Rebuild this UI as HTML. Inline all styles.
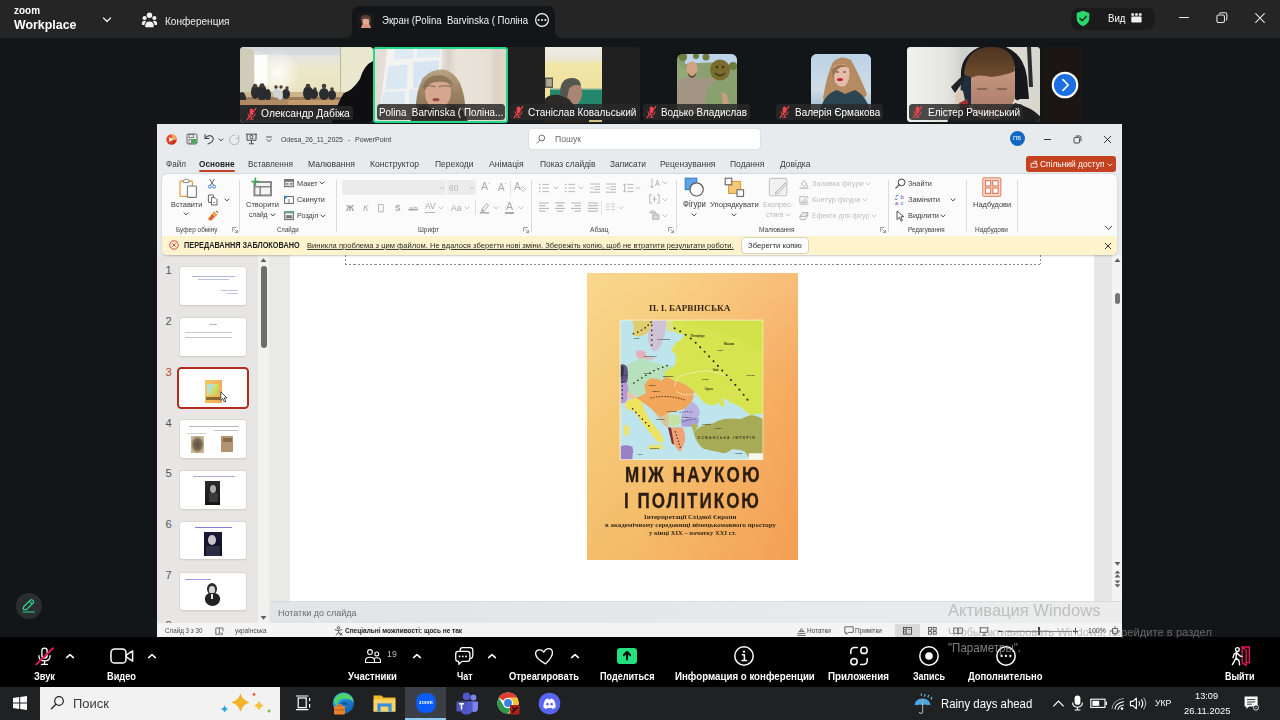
<!DOCTYPE html>
<html lang="uk">
<head>
<meta charset="utf-8">
<title>Zoom Workplace</title>
<style>
*{box-sizing:border-box;margin:0;padding:0}
html,body{width:1280px;height:720px;overflow:hidden;background:#131619;font-family:"Liberation Sans",sans-serif;color:#fff}
#root,#root *{position:absolute}
#root svg{overflow:visible}
.t{white-space:nowrap;line-height:1}
#topbar{left:0;top:0;width:1280px;height:37.5px;background:#252526}
#tab{left:352px;top:6px;width:203px;height:32px;background:#131619;border-radius:7px 7px 0 0}
.tile{overflow:hidden;border-radius:4px}
#ppt{left:157px;top:124px;width:965px;height:513px;background:#e8ebee;overflow:hidden;color:#222}
#ztool{left:0;top:637px;width:1280px;height:49.5px;background:#000}
#task{left:0;top:686.5px;width:1280px;height:33.5px;background:#1f2123}

</style>
</head>
<body>
<div id="root" style="left:0;top:0;width:1280px;height:720px">
<!-- TOP BAR -->
<div id="topbar">
<div class="t" style="left:13.5px;top:5.96px;font-size:10px;color:#fff;font-weight:bold;transform:scaleX(0.9958);transform-origin:0 0;">zoom</div>
<div class="t" style="left:13.5px;top:17.57px;font-size:13.2px;color:#fff;font-weight:bold;transform:scaleX(0.9396);transform-origin:0 0;">Workplace</div>
<svg style="left:101px;top:15px;" width="12" height="10" viewBox="0 0 12 10"><path d="M2.5 3 L6 6.5 L9.5 3" fill="none" stroke="#e6e6e6" stroke-width="1.4" stroke-linecap="round" stroke-linejoin="round"/></svg>
<svg style="left:141px;top:11px;" width="17" height="17" viewBox="0 0 17 17"><g fill="#f2f2f2"><circle cx="8.5" cy="4.3" r="2.7"/><circle cx="3.6" cy="7" r="2.1"/><circle cx="13.4" cy="7" r="2.1"/><path d="M4.2 15.5 q0-5 4.3-5 q4.3 0 4.3 5 q0 .8-.8.8 h-7 q-.8 0-.8-.8z"/><path d="M.8 13.2 q0-3.4 2.8-3.4 q1.2 0 1.6.6 q-1.6 1.2-1.8 3.6 h-1.8 q-.8 0-.8-.8z"/><path d="M16.2 13.2 q0-3.4-2.8-3.4 q-1.2 0-1.6.6 q1.6 1.2 1.8 3.6 h1.8 q.8 0 .8-.8z"/></g></svg>
<div class="t" style="left:165.0px;top:14.60px;font-size:12px;color:#ececec;transform:scale(0.8389,0.8830);transform-origin:0 10.00px;">Конференция</div>
<div id="tab"></div>
<svg style="left:345px;top:30px;" width="8" height="8" viewBox="0 0 8 8"><path d="M8 8 H0 Q7 8 7 0 H8z" fill="#131619"/></svg>
<svg style="left:554px;top:30px;" width="8" height="8" viewBox="0 0 8 8"><path d="M0 8 H8 Q1 8 1 0 H0z" fill="#131619"/></svg>
<svg style="left:358px;top:13px;" width="16" height="16" viewBox="0 0 16 16"><rect width="16" height="16" rx="3" fill="#1a1a1a"/><path d="M2.5 6 Q3 1.5 8.5 2 Q13.5 2.5 13 8 L12 11 L4 11 Z" fill="#5a4034"/><path d="M4.5 6.5 Q7 5 11 6.5 L11 12 Q8 14.5 5 12z" fill="#e8a894"/><path d="M4 11.5 h8 l1 3.5 h-10z" fill="#d89480"/></svg>
<div class="t" style="left:381.5px;top:14.40px;font-size:12px;color:#f2f2f2;transform:scale(0.7997,0.8418);transform-origin:0 10.00px;">Экран (Polina  Barvinska ( Поліна</div>
<svg style="left:532.7px;top:11px;" width="18" height="18" viewBox="0 0 18 18"><circle cx="9" cy="9" r="6.4" fill="none" stroke="#f2f2f2" stroke-width="1.2"/><circle cx="5.6" cy="9" r="1" fill="#f2f2f2"/><circle cx="9" cy="9" r="1" fill="#f2f2f2"/><circle cx="12.4" cy="9" r="1" fill="#f2f2f2"/></svg>
<div style="left:1071px;top:7.5px;width:83.5px;height:22px;background:#1b1b1b;border-radius:8px;"></div>
<svg style="left:1075px;top:10px;" width="16" height="17" viewBox="0 0 16 17"><path d="M8 .8 L14.3 3 V8.2 Q14.3 13.4 8 16.2 Q1.7 13.4 1.7 8.2 V3z" fill="#2bd56b"/><path d="M5 8.6 L7.2 10.8 L11.2 6.4" fill="none" stroke="#0e3a1e" stroke-width="1.5" stroke-linecap="round" stroke-linejoin="round"/></svg>
<div class="t" style="left:1108.0px;top:12.31px;font-size:12.5px;color:#fff;transform:scale(0.7738,0.8146);transform-origin:0 10.25px;">Вид</div>
<svg style="left:1131px;top:13px;" width="11" height="10" viewBox="0 0 11 10"><g fill="#f0f0f0"><rect x=".3" y=".3" width="2.7" height="2.4" rx=".4"/><rect x="4.1" y=".3" width="2.7" height="2.4" rx=".4"/><rect x="7.9" y=".3" width="2.7" height="2.4" rx=".4"/><rect x=".3" y="3.6" width="10.3" height="6" rx=".8"/></g></svg>
<div style="left:1178.5px;top:17.2px;width:10px;height:1.2px;background:#e6e6e6;"></div>
<svg style="left:1215px;top:11px;" width="14" height="14" viewBox="0 0 16 16"><rect x="2.2" y="4.6" width="8.6" height="8.6" rx="1.8" fill="none" stroke="#e6e6e6" stroke-width="1.2"/><path d="M5 3.2 Q5.6 2 7 2 H11.4 Q13.6 2 13.6 4.2 V8.6 Q13.6 10 12.4 10.6" fill="none" stroke="#e6e6e6" stroke-width="1.2"/></svg>
<svg style="left:1254px;top:12px;" width="12" height="12" viewBox="0 0 14 14"><path d="M2 2 L12 12 M12 2 L2 12" stroke="#e6e6e6" stroke-width="1.3" stroke-linecap="round"/></svg>
</div>
<!-- VIDEO STRIP -->
<div class="tile" style="left:240px;top:47px;width:133px;height:75.5px;background:#e4e2c4">
<svg style="left:0px;top:0px;filter:blur(.55px);" width="133" height="76" viewBox="0 0 133 76">
<defs><linearGradient id="c1" x1="0" y1="0" x2="0" y2="1"><stop offset="0" stop-color="#d9dde2"/><stop offset=".16" stop-color="#e6e6dc"/><stop offset=".3" stop-color="#ebe8c8"/><stop offset="1" stop-color="#e3dfb9"/></linearGradient>
<radialGradient id="g1" cx=".5" cy=".5" r=".5"><stop offset="0" stop-color="#fff" stop-opacity=".95"/><stop offset="1" stop-color="#fff" stop-opacity="0"/></radialGradient></defs>
<rect width="133" height="76" fill="url(#c1)"/>
<path d="M0 0 H14 V50 H0z" fill="#cfcdb9"/>
<path d="M0 0 H133 V3 L100 8 L30 8 L14 3z" fill="#d5d9de"/>
<ellipse cx="38" cy="26" rx="22" ry="24" fill="url(#g1)"/>
<rect x="14.5" y="8" width="13" height="30" fill="#fdfdfb"/>
<rect x="100" y="0" width="1.2" height="50" fill="#b9b79d"/>
<rect x="101" y="0" width="32" height="52" fill="#e9e7cd"/>
<rect x="0" y="49" width="104" height="10" fill="#9a7a58"/>
<rect x="0" y="45" width="104" height="5" fill="#c9b48c"/>
<g fill="#2a2c30"><ellipse cx="15" cy="45" rx="4" ry="7"/><ellipse cx="22" cy="46" rx="5" ry="8"/><ellipse cx="28" cy="48" rx="3" ry="6"/><ellipse cx="46" cy="47" rx="4" ry="5"/><ellipse cx="68" cy="46" rx="5" ry="7"/><ellipse cx="74" cy="47" rx="4" ry="5"/><ellipse cx="84" cy="47" rx="5" ry="6"/><ellipse cx="92" cy="48" rx="4" ry="5"/><ellipse cx="2" cy="52" rx="4" ry="7"/></g>
<g fill="#cfd2d4"><ellipse cx="36" cy="46" rx="3" ry="5"/><ellipse cx="40" cy="48" rx="3" ry="5"/></g>
<g fill="#4a3a34"><circle cx="15" cy="39" r="2.2"/><circle cx="22" cy="38.6" r="2.4"/><circle cx="36" cy="40" r="1.7"/><circle cx="41" cy="40" r="1.7"/><circle cx="47" cy="41" r="1.7"/><circle cx="68" cy="39" r="2.3"/><circle cx="75" cy="42" r="1.7"/><circle cx="84" cy="39" r="2.3"/><circle cx="92" cy="42" r="1.7"/></g>
<rect x="0" y="53" width="104" height="6" fill="#b08a62"/>
<rect x="48" y="53" width="50" height="5" fill="#c39a6c"/>
<rect x="0" y="58" width="133" height="18" fill="#2b2a2a"/>
<path d="M133 14 Q124 18 120 32 Q112 44 104 46 Q98 54 92 76 H133z" fill="#0f0f11"/>
</svg>
</div>
<div style="left:243px;top:105.5px;width:109.69999999999999px;height:14.8px;background:rgba(40,40,40,.84);border-radius:3.5px;"></div>
<svg style="left:246px;top:107.5px;" width="11" height="12" viewBox="0 0 11 12"><g transform="translate(0.5,0)"><rect x="3.2" y=".6" width="3.6" height="6.6" rx="1.8" fill="#f0444e"/><path d="M1.4 5.4 Q1.4 9 5 9 Q8.6 9 8.6 5.4 M5 9 V11 M3 11.2 H7" fill="none" stroke="#f0444e" stroke-width="1"/><path d="M.6 11.6 L9.4 .4" stroke="#f0444e" stroke-width="1.2" stroke-linecap="round"/></g></svg>
<div class="t" style="left:261.0px;top:108.08px;font-size:11px;color:#fff;transform:scale(0.9349,0.9842);transform-origin:0 9.50px;">Олександр Дабіжа</div>
<div class="tile" style="left:373px;top:46.5px;width:134.5px;height:76px;background:#e6dfd6;border:2px solid #23d98b;border-radius:3px">
<svg style="left:-5px;top:-6.5px;filter:blur(.55px);" width="140" height="84" viewBox="0 0 1200 720">
<defs><linearGradient id="w2" x1="0" y1="0" x2="1" y2="0"><stop offset="0" stop-color="#e4ddd5"/><stop offset=".5" stop-color="#ece6de"/><stop offset=".56" stop-color="#d9d1c6"/><stop offset=".62" stop-color="#e9e3da"/><stop offset=".85" stop-color="#e6dfd4"/><stop offset=".9" stop-color="#dcd3c5"/><stop offset="1" stop-color="#e2d9cc"/></linearGradient>
<linearGradient id="h2" x1="0" y1="0" x2="0" y2="1"><stop offset="0" stop-color="#b7a587"/><stop offset=".5" stop-color="#a08868"/><stop offset="1" stop-color="#8a7458"/></linearGradient></defs>
<rect width="1200" height="720" fill="url(#w2)"/>
<path d="M150 40 H612 V540 H90z" fill="#f3f3f1"/>
<path d="M215 55 H372 V140 L205 150z M402 55 H600 V128 L402 138z" fill="#e0eaf1"/>
<path d="M160 205 L322 192 L318 398 L130 410z" fill="#dbe8f2"/>
<path d="M372 172 L592 158 L590 385 L370 396z" fill="#d7e6f2"/>
<path d="M118 428 L300 420 L296 530 L100 534z M336 410 L440 404 L436 530 L334 530z" fill="#dde8f0"/>
<path d="M392 560 Q396 420 452 310 Q520 236 624 234 Q716 250 770 350 Q812 450 816 560z" fill="url(#h2)"/>
<path d="M468 400 Q480 330 580 326 Q690 330 694 420 Q700 520 610 580 Q520 580 480 500z" fill="#d6a78f"/>
<path d="M452 380 Q480 290 590 286 Q690 290 716 380 Q660 330 580 342 Q500 340 470 420z" fill="#8f785a"/>
<path d="M456 384 Q500 366 560 384 M590 384 Q640 366 690 384" fill="none" stroke="#7b6a5c" stroke-width="9"/>
<ellipse cx="566" cy="494" rx="30" ry="13" fill="#96484a"/>
<path d="M340 720 Q360 560 470 540 Q580 620 720 540 Q820 570 850 720z" fill="#38342f"/>
</svg>
</div>
<div style="left:376.5px;top:103.8px;width:128.3px;height:15.8px;background:rgba(40,40,40,.84);border-radius:3.5px;"></div>
<div class="t" style="left:379.3px;top:106.88px;font-size:11px;color:#fff;transform:scale(0.8957,0.9429);transform-origin:0 9.50px;">Polina  Barvinska ( Поліна...</div>
<div style="left:508.5px;top:46.5px;width:131.5px;height:76px;background:#202020;border-radius:0 4px 4px 0;"></div>
<div class="tile" style="left:544.5px;top:46.5px;width:57px;height:76px;border-radius:0;background:#efe3a4">
<svg style="left:0px;top:0px;filter:blur(.55px);" width="57" height="76" viewBox="0 0 57 76">
<defs><linearGradient id="c3" x1="0" y1="0" x2="0" y2="1"><stop offset="0" stop-color="#efeee6"/><stop offset=".16" stop-color="#e9e6d6"/><stop offset=".22" stop-color="#f1e6a8"/><stop offset="1" stop-color="#eedc94"/></linearGradient></defs>
<rect width="57" height="76" fill="url(#c3)"/>
<rect x="0" y="30.5" width="8" height="10.5" fill="#5d5b4c"/><rect x="1.2" y="32" width="5.6" height="7.5" fill="#a9a995"/>
<rect x="5" y="41" width="52" height="22" fill="#24866a"/>
<rect x="5" y="41" width="52" height="1.6" fill="#b9c9a5"/>
<path d="M15 46 Q15 31 27 31 Q36 31 36 40 L33 44 L26 50 L17 52z" fill="#55564f"/>
<path d="M24 42 Q28 36 36 39 Q38 46 36 52 Q34 58 28 58 L22 52z" fill="#a98672"/>
<path d="M0 52 Q4 47 14 48 L24 52 L30 60 L30 76 H0z" fill="#2b2a27"/>
<rect x="0" y="62" width="57" height="14" fill="#26241f"/>
<rect x="44" y="73" width="13" height="2" fill="#d2c48c"/>
</svg>
</div>
<div style="left:510.4px;top:104px;width:129.60000000000002px;height:15.8px;background:rgba(40,40,40,.84);border-radius:3.5px;"></div>
<svg style="left:513.4px;top:106px;" width="11" height="12" viewBox="0 0 11 12"><g transform="translate(0.5,0)"><rect x="3.2" y=".6" width="3.6" height="6.6" rx="1.8" fill="#f0444e"/><path d="M1.4 5.4 Q1.4 9 5 9 Q8.6 9 8.6 5.4 M5 9 V11 M3 11.2 H7" fill="none" stroke="#f0444e" stroke-width="1"/><path d="M.6 11.6 L9.4 .4" stroke="#f0444e" stroke-width="1.2" stroke-linecap="round"/></g></svg>
<div class="t" style="left:528.0px;top:107.08px;font-size:11px;color:#fff;transform:scale(0.9088,0.9566);transform-origin:0 9.50px;">Станіслав Ковальський</div>
<div class="tile" style="left:677px;top:54px;width:60px;height:60px;border-radius:6px;background:#7f9566">
<svg style="left:0px;top:0px;filter:blur(.55px);" width="60" height="60" viewBox="0 0 60 60">
<rect width="60" height="60" fill="#8aa070"/>
<path d="M8 0 H60 V12 Q40 6 8 10z" fill="#bcd3ea"/>
<g fill="#6d7b3c"><circle cx="6" cy="3" r="4"/><circle cx="19" cy="2" r="3"/><circle cx="29" cy="3" r="3.5"/><circle cx="56" cy="12" r="4"/></g>
<path d="M0 10 Q10 14 12 24 L0 30z" fill="#93a879"/>
<ellipse cx="43" cy="16" rx="10" ry="10.5" fill="#7a6b2e"/>
<path d="M38 19 Q43 24 48 19" fill="none" stroke="#3d3414" stroke-width="1.2"/><circle cx="40" cy="13" r="1.2" fill="#3d3414"/><circle cx="46" cy="13" r="1.2" fill="#3d3414"/>
<path d="M24 60 Q22 40 36 28 Q48 26 56 34 Q60 44 58 60z" fill="#86a06e"/>
<path d="M0 30 Q4 23 14 23 L26 25 Q34 22 40 26 L30 36 L26 60 H0z" fill="#a39584"/>
<ellipse cx="15" cy="15" rx="5.6" ry="7.5" fill="#d2a486"/>
<path d="M10.5 18 Q15 26 19.5 18 Q19 23 15 24 Q11 23 10.5 18z" fill="#5a4436"/>
<path d="M44 38 L50 40 L52 50 L46 50z" fill="#c89e82"/>
</svg>
</div>
<div style="left:643px;top:104px;width:107px;height:15.8px;background:rgba(40,40,40,.84);border-radius:3.5px;"></div>
<svg style="left:646px;top:106px;" width="11" height="12" viewBox="0 0 11 12"><g transform="translate(0.5,0)"><rect x="3.2" y=".6" width="3.6" height="6.6" rx="1.8" fill="#f0444e"/><path d="M1.4 5.4 Q1.4 9 5 9 Q8.6 9 8.6 5.4 M5 9 V11 M3 11.2 H7" fill="none" stroke="#f0444e" stroke-width="1"/><path d="M.6 11.6 L9.4 .4" stroke="#f0444e" stroke-width="1.2" stroke-linecap="round"/></g></svg>
<div class="t" style="left:661.0px;top:107.08px;font-size:11px;color:#fff;transform:scale(0.8978,0.9450);transform-origin:0 9.50px;">Водько Владислав</div>
<div class="tile" style="left:810.5px;top:54px;width:60px;height:60px;border-radius:6px;background:#c3d5e4">
<svg style="left:0px;top:0px;filter:blur(.55px);" width="60" height="60" viewBox="0 0 60 60">
<defs><linearGradient id="s5" x1="0" y1="0" x2="0" y2="1"><stop offset="0" stop-color="#bcd2e6"/><stop offset=".6" stop-color="#cfdce6"/><stop offset=".8" stop-color="#b6c8d6"/><stop offset="1" stop-color="#9fb4c4"/></linearGradient></defs>
<rect width="60" height="60" fill="url(#s5)"/>
<path d="M12 44 Q16 20 22 8 Q30 0 40 6 Q48 20 56 40 L52 46 L14 48z" fill="#b58c62"/>
<path d="M22 14 Q30 6 38 14 Q40 26 34 32 Q28 34 24 28z" fill="#e4bcac"/>
<path d="M21 16 Q28 6 39 14 Q32 11 27 15 Q23 19 22 26z" fill="#9c7450"/>
<ellipse cx="29" cy="25.5" rx="3" ry="1.6" fill="#c2212e"/>
<path d="M25 18 h3 M32 18 h3" stroke="#4d3a30" stroke-width="1.2"/>
<path d="M8 60 Q12 40 26 36 L34 40 L44 36 Q56 42 60 60z" fill="#2b4652"/>
</svg>
</div>
<div style="left:776.4px;top:104px;width:106.20000000000005px;height:15.8px;background:rgba(40,40,40,.84);border-radius:3.5px;"></div>
<svg style="left:779.4px;top:106px;" width="11" height="12" viewBox="0 0 11 12"><g transform="translate(0.5,0)"><rect x="3.2" y=".6" width="3.6" height="6.6" rx="1.8" fill="#f0444e"/><path d="M1.4 5.4 Q1.4 9 5 9 Q8.6 9 8.6 5.4 M5 9 V11 M3 11.2 H7" fill="none" stroke="#f0444e" stroke-width="1"/><path d="M.6 11.6 L9.4 .4" stroke="#f0444e" stroke-width="1.2" stroke-linecap="round"/></g></svg>
<div class="t" style="left:794.5px;top:107.08px;font-size:11px;color:#fff;transform:scale(0.9048,0.9524);transform-origin:0 9.50px;">Валерія Єрмакова</div>
<div class="tile" style="left:906.5px;top:46.8px;width:133.5px;height:75.4px;border-radius:4px;background:#dedfda">
<svg style="left:0px;top:0px;filter:blur(.55px);" width="134" height="76" viewBox="0 0 134 76">
<defs><linearGradient id="w6" x1="0" y1="0" x2="1" y2="0"><stop offset="0" stop-color="#f1f2ef"/><stop offset=".3" stop-color="#e4e5e1"/><stop offset=".42" stop-color="#cfd0cb"/><stop offset=".8" stop-color="#dcdcd4"/><stop offset="1" stop-color="#d6d6ce"/></linearGradient><linearGradient id="f6" x1="0" y1="0" x2="0" y2="1"><stop offset="0" stop-color="#c4957e"/><stop offset="1" stop-color="#a67866"/></linearGradient><linearGradient id="hr6" x1="0" y1="0" x2="0" y2="1"><stop offset="0" stop-color="#4e3421"/><stop offset="1" stop-color="#73502f"/></linearGradient></defs>
<rect width="134" height="76" fill="url(#w6)"/>
<path d="M54 30 Q52 4 84 -4 Q116 0 120 30 L122 52 L112 52 L112 30 Q104 6 84 6 Q64 8 64 30 L62 52 L54 52z" fill="#16181c"/>
<path d="M57 26 Q60 -2 88 0 Q108 2 108 24 Q100 32 80 30 Q66 30 60 34z" fill="url(#hr6)"/>
<path d="M62 32 Q70 26 84 30 Q100 28 108 24 L108 50 Q104 66 92 72 L74 72 Q64 62 62 48z" fill="url(#f6)"/>
<path d="M58 28 Q52 36 54 50 Q58 60 64 58 L64 30z" fill="#1e2e3e"/>
<path d="M108 20 Q118 26 116 46 Q112 56 108 52z" fill="#14161a"/>
<path d="M124 0 L126 40 L122 40 L120 0z" fill="#2a2c2e"/>
<path d="M44 40 L56 28 L58 32 L48 46z" fill="#202224"/>
<path d="M70 42 h10 M90 42 h10" stroke="#7a5a48" stroke-width="1.3"/>
<path d="M48 52 Q50 40 56 44 L60 62 L50 64z" fill="#d8c8b8"/>
<path d="M52 56 L60 52 L64 66 L54 68z" fill="#9a3030"/>
<path d="M40 76 Q44 62 60 60 L74 72 L92 72 L108 56 Q124 60 134 70 V76z" fill="#1d1d1f"/>
</svg>
</div>
<div style="left:909px;top:104px;width:114.39999999999998px;height:15.8px;background:rgba(40,40,40,.84);border-radius:3.5px;"></div>
<svg style="left:912px;top:106px;" width="11" height="12" viewBox="0 0 11 12"><g transform="translate(0.5,0)"><rect x="3.2" y=".6" width="3.6" height="6.6" rx="1.8" fill="#f0444e"/><path d="M1.4 5.4 Q1.4 9 5 9 Q8.6 9 8.6 5.4 M5 9 V11 M3 11.2 H7" fill="none" stroke="#f0444e" stroke-width="1"/><path d="M.6 11.6 L9.4 .4" stroke="#f0444e" stroke-width="1.2" stroke-linecap="round"/></g></svg>
<div class="t" style="left:927.8px;top:107.08px;font-size:11px;color:#fff;transform:scale(0.9125,0.9606);transform-origin:0 9.50px;">Елістер Рачинський</div>
<div style="left:1042px;top:47px;width:40px;height:75px;background:#1b1614;"></div>
<svg style="left:1051px;top:70.5px;" width="28" height="28" viewBox="0 0 28 28"><circle cx="14" cy="14" r="12.2" fill="#1b6fe3" stroke="#fff" stroke-width="2.2"/><path d="M12 8.6 L17.2 14 L12 19.4" fill="none" stroke="#fff" stroke-width="1.7" stroke-linecap="round" stroke-linejoin="round"/></svg>
<svg style="left:16px;top:592.5px;" width="26" height="26" viewBox="0 0 26 26"><circle cx="13" cy="13" r="13" fill="#2a2e30"/><path d="M7.2 16.4 L7.6 13.8 L14.6 7 Q15.4 6.4 16.2 7 L17.4 8.2 Q18 9 17.4 9.8 L10.4 16.6z M13.4 8.4 L16 11" fill="none" stroke="#2fd28c" stroke-width="1.2" stroke-linejoin="round"/><path d="M7 19 H18.4" stroke="#2fd28c" stroke-width="1.2" stroke-linecap="round"/></svg>
<!-- POWERPOINT -->
<div id="ppt">
<div style="left:0px;top:0px;width:965px;height:50px;background:#e8ebee;"></div>
<svg style="left:9px;top:10px;" width="11" height="11" viewBox="0 0 11 11"><defs><linearGradient id="pl" x1="0" y1="0" x2="1" y2="1"><stop offset="0" stop-color="#f2542a"/><stop offset="1" stop-color="#c2281a"/></linearGradient></defs><circle cx="5.5" cy="5.5" r="5.2" fill="url(#pl)"/><path d="M5.5 .3 A5.2 5.2 0 0 1 10.7 5.5 Q8 6.4 5.5 5.5z" fill="#fda65c"/><path d="M3.2 3.2 L7.4 5.6 L3.2 8z" fill="#fff" opacity=".95"/></svg>
<svg style="left:29px;top:9px;" width="12" height="12" viewBox="0 0 12 12"><rect x="1" y="1" width="10" height="10" rx="1.2" fill="none" stroke="#666" stroke-width="1"/><rect x="3" y="1.4" width="4.6" height="3" fill="none" stroke="#666" stroke-width=".8"/><rect x="5.6" y="6" width="5" height="4.8" fill="#4aa85a"/><rect x="3" y="6.6" width="2.4" height="4" fill="none" stroke="#666" stroke-width=".7"/></svg>
<svg style="left:46px;top:9px;" width="13" height="12" viewBox="0 0 13 12"><path d="M2 1.5 V5.5 H6" fill="none" stroke="#444" stroke-width="1.1" stroke-linecap="round" stroke-linejoin="round"/><path d="M2.4 5.2 Q5 1.6 8.4 3 Q11.4 4.8 9.6 8 Q8.4 9.8 5 11" fill="none" stroke="#444" stroke-width="1.1" stroke-linecap="round"/></svg>
<svg style="left:60.5px;top:14px;" width="6" height="4" viewBox="0 0 6 4"><path d="M1 .9 L3 2.9 L5 .9" fill="none" stroke="#444" stroke-width="1" stroke-linecap="round" stroke-linejoin="round"/></svg>
<svg style="left:71px;top:9.5px;" width="12" height="12" viewBox="0 0 12 12"><path d="M6.6 1.2 A4.8 4.8 0 1 0 10.6 4" fill="none" stroke="#b4b4b4" stroke-width="1" stroke-linecap="round"/><path d="M10.8 1 V4.2 H7.8" fill="none" stroke="#b4b4b4" stroke-width="1"/></svg>
<svg style="left:88px;top:9px;" width="13" height="12" viewBox="0 0 13 12"><path d="M1 1.2 H12 M2 1.2 V7.2 H11 V1.2 M6.5 7.2 V10.4 M4 10.8 H9" fill="none" stroke="#444" stroke-width="1"/><path d="M5.2 2.6 H7.8 V5.4 H5.2z" fill="none" stroke="#444" stroke-width=".8"/></svg>
<svg style="left:108px;top:12px;" width="8" height="7" viewBox="0 0 8 7"><path d="M1.2 1 H6.8" stroke="#444" stroke-width=".9"/><path d="M1.6 3.2 L4 5.6 L6.4 3.2" fill="none" stroke="#444" stroke-width=".9"/></svg>
<div class="t" style="left:124.0px;top:11.02px;font-size:8.6px;color:#3a3a3a;transform:scale(0.8019,0.8441);transform-origin:0 7.30px;">Odesa_26_11_2025</div>
<div class="t" style="left:190.6px;top:11.02px;font-size:8.6px;color:#3a3a3a;transform:scale(0.8379,0.8820);transform-origin:0 7.30px;">-</div>
<div class="t" style="left:197.8px;top:11.02px;font-size:8.6px;color:#3a3a3a;transform:scale(0.8231,0.8664);transform-origin:0 7.30px;">PowerPoint</div>
<div style="left:372px;top:4.599999999999994px;width:231px;height:20.8px;background:#fff;border-radius:3px;box-shadow:0 0 0 .6px #d6d9dc;"></div>
<svg style="left:379px;top:10px;" width="10" height="10" viewBox="0 0 10 10"><circle cx="5.8" cy="4" r="2.9" fill="none" stroke="#666" stroke-width=".9"/><path d="M3.8 6.2 L1 9.2" stroke="#666" stroke-width=".9" stroke-linecap="round"/></svg>
<div class="t" style="left:398.0px;top:10.16px;font-size:9.5px;color:#6a6a6a;transform:scale(0.9078,0.9556);transform-origin:0 8.25px;">Пошук</div>
<div style="left:852.5px;top:7.300000000000011px;width:15px;height:15px;background:#1168c4;border-radius:50%;"></div>
<div class="t" style="left:856.0px;top:12.20px;font-size:5.2px;color:#fff;transform:scaleX(1.1469);transform-origin:0 0;">ПБ</div>
<div style="left:886.5px;top:15px;width:7.5px;height:1px;background:#333;"></div>
<svg style="left:916px;top:11px;" width="9" height="9" viewBox="0 0 9 9"><rect x="1" y="2.4" width="5.6" height="5.6" rx="1" fill="none" stroke="#333" stroke-width=".9"/><path d="M2.8 1 H6.6 Q8 1 8 2.4 V6.2" fill="none" stroke="#333" stroke-width=".9"/></svg>
<svg style="left:946px;top:11px;" width="9" height="9" viewBox="0 0 9 9"><path d="M1 1 L8 8 M8 1 L1 8" stroke="#333" stroke-width=".95"/></svg>
<div class="t" style="left:9.4px;top:35.34px;font-size:9.6px;color:#3a3a3a;transform:scale(0.8432,0.8875);transform-origin:0 8.30px;">Файл</div>
<div class="t" style="left:90.7px;top:35.34px;font-size:9.6px;color:#3a3a3a;transform:scale(0.8560,0.9010);transform-origin:0 8.30px;">Вставлення</div>
<div class="t" style="left:150.8px;top:35.34px;font-size:9.6px;color:#3a3a3a;transform:scale(0.8954,0.9425);transform-origin:0 8.30px;">Малювання</div>
<div class="t" style="left:213.0px;top:35.34px;font-size:9.6px;color:#3a3a3a;transform:scale(0.8952,0.9423);transform-origin:0 8.30px;">Конструктор</div>
<div class="t" style="left:277.8px;top:35.34px;font-size:9.6px;color:#3a3a3a;transform:scale(0.8875,0.9342);transform-origin:0 8.30px;">Переходи</div>
<div class="t" style="left:331.7px;top:35.34px;font-size:9.6px;color:#3a3a3a;transform:scale(0.8988,0.9461);transform-origin:0 8.30px;">Анімація</div>
<div class="t" style="left:382.5px;top:35.34px;font-size:9.6px;color:#3a3a3a;transform:scale(0.8825,0.9290);transform-origin:0 8.30px;">Показ слайдів</div>
<div class="t" style="left:453.0px;top:35.34px;font-size:9.6px;color:#3a3a3a;transform:scale(0.8698,0.9156);transform-origin:0 8.30px;">Записати</div>
<div class="t" style="left:503.3px;top:35.34px;font-size:9.6px;color:#3a3a3a;transform:scale(0.8869,0.9336);transform-origin:0 8.30px;">Рецензування</div>
<div class="t" style="left:572.8px;top:35.34px;font-size:9.6px;color:#3a3a3a;transform:scale(0.8873,0.9340);transform-origin:0 8.30px;">Подання</div>
<div class="t" style="left:622.5px;top:35.34px;font-size:9.6px;color:#3a3a3a;transform:scale(0.8832,0.9297);transform-origin:0 8.30px;">Довідка</div>
<div class="t" style="left:41.8px;top:35.34px;font-size:9.6px;color:#1e1e1e;font-weight:bold;transform:scale(0.8577,0.9746);transform-origin:0 8.30px;">Основне</div>
<div style="left:41.5px;top:46.19999999999999px;width:36px;height:1.6px;background:#c2432a;border-radius:1px;"></div>
<div style="left:869px;top:32.30000000000001px;width:89.5px;height:15.4px;background:#c4421f;border-radius:3px;"></div>
<svg style="left:873px;top:36px;" width="8" height="8" viewBox="0 0 8 8"><path d="M1 3.6 H7 V7.2 H1z" fill="none" stroke="#fff" stroke-width=".8"/><path d="M2.4 3.4 Q4 .2 6.6 1.8 M5.4 .8 L6.8 1.8 L5.8 3" fill="none" stroke="#fff" stroke-width=".8"/></svg>
<div class="t" style="left:882.5px;top:35.89px;font-size:9.3px;color:#fff;transform:scale(0.9021,0.9496);transform-origin:0 7.65px;">Спільний доступ</div>
<svg style="left:949.5px;top:38.5px;" width="6" height="4" viewBox="0 0 6 4"><path d="M1 .9 L3 2.9 L5 .9" fill="none" stroke="#fff" stroke-width="1" stroke-linecap="round" stroke-linejoin="round"/></svg>
<div style="left:0px;top:131px;width:965px;height:382px;background:#e8e8e7;"></div>
<div style="left:0px;top:131px;width:101px;height:368px;background:#e7e6e5;"></div>
<div style="left:101.30000000000001px;top:131px;width:11.2px;height:368px;background:#f1f1f0;"></div>
<div style="left:112.5px;top:131px;width:20.5px;height:347px;background:#e9e9e8;"></div>
<svg style="left:103px;top:133px;" width="7" height="6" viewBox="0 0 7 6"><path d="M.6 5 L3.5 1.2 L6.4 5z" fill="#5e5e5e"/></svg>
<div style="left:104px;top:142px;width:5.8px;height:82px;background:#6e6e6e;border-radius:3px;"></div>
<svg style="left:103px;top:490.5px;" width="7" height="6" viewBox="0 0 7 6"><path d="M.6 1 L3.5 4.8 L6.4 1z" fill="#5e5e5e"/></svg>
<div class="t" style="left:8.4px;top:140.64px;font-size:11.2px;color:#555;">1</div>
<div class="t" style="left:8.4px;top:191.64px;font-size:11.2px;color:#555;">2</div>
<div class="t" style="left:8.4px;top:242.64px;font-size:11.2px;color:#c2452c;">3</div>
<div class="t" style="left:8.4px;top:293.54px;font-size:11.2px;color:#555;">4</div>
<div class="t" style="left:8.4px;top:344.34px;font-size:11.2px;color:#555;">5</div>
<div class="t" style="left:8.4px;top:395.14px;font-size:11.2px;color:#555;">6</div>
<div class="t" style="left:8.4px;top:445.84px;font-size:11.2px;color:#555;">7</div>
<div class="t" style="left:8.4px;top:496.34px;font-size:11.2px;color:#555;clip-path:inset(0 0 62% 0);">8</div>
<div style="left:22.5px;top:143.3px;width:66.6px;height:37.5px;background:#fff;border-radius:2.5px;box-shadow:0 0 0 .7px #d9d6d3, 0 .6px 1.4px rgba(0,0,0,.18);overflow:hidden"><div style="left:12px;top:8.5px;width:43px;height:0.7px;background:#7a86c8;opacity:.6"></div><div style="left:18px;top:12px;width:31px;height:0.7px;background:#8a94cc;opacity:.6"></div><div style="left:41px;top:22.5px;width:17px;height:0.6px;background:#8f98cf;opacity:.6"></div><div style="left:47px;top:25.3px;width:11px;height:0.6px;background:#9aa2d4;opacity:.6"></div></div>
<div style="left:22.5px;top:194.3px;width:66.6px;height:37.5px;background:#fff;border-radius:2.5px;box-shadow:0 0 0 .7px #d9d6d3, 0 .6px 1.4px rgba(0,0,0,.18);overflow:hidden"><div style="left:29px;top:5.8px;width:8px;height:0.7px;background:#8a8a8a;opacity:.6"></div><div style="left:5px;top:13.6px;width:47px;height:0.6px;background:#a2a2a2;opacity:.6"></div><div style="left:5px;top:19px;width:47px;height:0.6px;background:#a2a2a2;opacity:.6"></div></div>
<div style="left:20px;top:243px;width:71.6px;height:42px;background:#fff;border:2px solid #b32a1e;border-radius:4.5px;overflow:hidden"><div style="left:25.6px;top:11.4px;width:17px;height:23px;background:linear-gradient(100deg,#f4c766,#f2a855)"></div><div style="left:28px;top:14.6px;width:12px;height:11px;background:linear-gradient(120deg,#b8e0d8 30%,#d3df59 60%,#c9c06a)"></div><div style="left:27.4px;top:27.6px;width:13.4px;height:3.6px;background:#6a4a22;opacity:.75"></div></div>
<svg style="left:62.5px;top:267px;" width="8" height="12" viewBox="0 0 8 12"><path d="M.8 .8 V9.4 L2.8 7.6 L4.4 11 L5.8 10.4 L4.2 7 H7z" fill="#fff" stroke="#222" stroke-width=".8" stroke-linejoin="round"/></svg>
<div style="left:22.5px;top:296.2px;width:66.6px;height:37.5px;background:#fff;border-radius:2.5px;box-shadow:0 0 0 .7px #d9d6d3, 0 .6px 1.4px rgba(0,0,0,.18);overflow:hidden"><div style="left:9px;top:5.4px;width:50px;height:0.6px;background:#8a8a9a;opacity:.6"></div><div style="left:34px;top:9.6px;width:24px;height:0.6px;background:#9a9aa8;opacity:.6"></div><div style="left:7px;top:12.6px;width:19px;height:0.5px;background:#b0b0b8;opacity:.6"></div><div style="left:11.6px;top:15.5px;width:13.4px;height:17px;background:radial-gradient(ellipse at 50% 50%,#5a5044 0,#7a6a54 45%,#c9b896 72%)"></div><div style="left:41.4px;top:16px;width:12.6px;height:15.6px;background:#b39470"></div><div style="left:43px;top:18px;width:9px;height:4px;background:#8a6c4c"></div></div>
<div style="left:22.5px;top:347px;width:66.6px;height:37.5px;background:#fff;border-radius:2.5px;box-shadow:0 0 0 .7px #d9d6d3, 0 .6px 1.4px rgba(0,0,0,.18);overflow:hidden"><div style="left:13px;top:5.2px;width:42px;height:0.8px;background:#6a78c8;opacity:.6"></div><div style="left:25.6px;top:10px;width:14.8px;height:23.5px;background:linear-gradient(180deg,#2a2a2a,#151515)"></div><div style="left:30px;top:13.5px;width:6.5px;height:8px;border-radius:50%;background:#a8a8a8"></div><div style="left:29px;top:22px;width:9px;height:9px;background:#3a3a3a"></div></div>
<div style="left:22.5px;top:397.79999999999995px;width:66.6px;height:37.5px;background:#fff;border-radius:2.5px;box-shadow:0 0 0 .7px #d9d6d3, 0 .6px 1.4px rgba(0,0,0,.18);overflow:hidden"><div style="left:15px;top:5.4px;width:37px;height:1px;background:#2a2ad0;opacity:.6"></div><div style="left:24.4px;top:10.4px;width:17.8px;height:23.6px;background:linear-gradient(180deg,#1a1a34,#0e0e20)"></div><div style="left:28.4px;top:13.4px;width:8.4px;height:10px;border-radius:50%;background:#c9c4cc"></div><div style="left:26.4px;top:24.4px;width:14px;height:9.6px;background:#2c2c44"></div></div>
<div style="left:22.5px;top:448.5px;width:66.6px;height:37.5px;background:#fff;border-radius:2.5px;box-shadow:0 0 0 .7px #d9d6d3, 0 .6px 1.4px rgba(0,0,0,.18);overflow:hidden"><div style="left:5.6px;top:6.6px;width:26px;height:0.8px;background:#5a5ae0;opacity:.6"></div><div style="left:27px;top:10.4px;width:10.6px;height:12px;border-radius:50%;background:#2e2e2e"></div><div style="left:29.2px;top:13px;width:6.4px;height:8px;border-radius:50%;background:#d6d6d6"></div><div style="left:25px;top:20.6px;width:15px;height:13px;border-radius:40% 40% 50% 50%;background:#222"></div><div style="left:31px;top:21px;width:2.6px;height:5px;background:#e6e6e6"></div></div>
<div style="left:133px;top:131px;width:804.4px;height:346.4px;background:#fff;"></div>
<div style="left:937.4000000000001px;top:131px;width:17.6px;height:382px;background:#e6e6e6;"></div>
<div style="left:955px;top:131px;width:10px;height:368px;background:#f4f4f4;"></div>
<div style="left:188px;top:139.8px;width:695.4px;height:1px;background:repeating-linear-gradient(90deg,#8c8c8c 0 2.2px,transparent 2.2px 4.2px);"></div>
<div style="left:188px;top:131px;width:1px;height:9px;background:repeating-linear-gradient(180deg,#8c8c8c 0 2.2px,transparent 2.2px 4.2px);"></div>
<div style="left:882.5999999999999px;top:131px;width:1px;height:9px;background:repeating-linear-gradient(180deg,#8c8c8c 0 2.2px,transparent 2.2px 4.2px);"></div>
<svg style="left:956.5px;top:133px;" width="7" height="6" viewBox="0 0 7 6"><path d="M.6 5 L3.5 1.2 L6.4 5z" fill="#5e5e5e"/></svg>
<div style="left:957.5999999999999px;top:169px;width:5.4px;height:11px;background:#767676;border-radius:2.5px;"></div>
<svg style="left:956.5px;top:437px;" width="7" height="6" viewBox="0 0 7 6"><path d="M.6 1 L3.5 4.8 L6.4 1z" fill="#5e5e5e"/></svg>
<svg style="left:956.5px;top:445.5px;" width="7" height="8" viewBox="0 0 7 8"><path d="M.6 3.6 L3.5 .4 L6.4 3.6z M.6 7.4 L3.5 4.2 L6.4 7.4z" fill="#5e5e5e"/></svg>
<svg style="left:956.5px;top:455.5px;" width="7" height="8" viewBox="0 0 7 8"><path d="M.6 .4 L3.5 3.6 L6.4 .4z M.6 4.2 L3.5 7.4 L6.4 4.2z" fill="#5e5e5e"/></svg>
<div style="left:113px;top:477.6px;width:852px;height:22px;background:linear-gradient(90deg,#e1e5e8 0%,#e5e8ea 45%,#ececec 100%);"></div>
<div style="left:113px;top:477.4px;width:852px;height:0.8px;background:#d9dbdc;"></div>
<div class="t" style="left:120.5px;top:485.09px;font-size:9.3px;color:#6a6a6a;transform:scaleX(0.9675);transform-origin:0 0;">Нотатки до слайда</div>
<div style="left:0px;top:499px;width:965px;height:14px;background:#f4f4f4;"></div>
<div class="t" style="left:7.5px;top:503.11px;font-size:7.6px;color:#4a4a4a;transform:scale(0.8273,0.8708);transform-origin:0 6.30px;">Слайд 3 з 30</div>
<svg style="left:58px;top:502.5px;" width="9" height="9" viewBox="0 0 9 9"><path d="M.8 1 H4.4 V7.4 H.8z M4.4 1 H8 V4.4" fill="none" stroke="#555" stroke-width=".8"/><path d="M5.4 5.6 L8 8.2 M8 5.6 L5.4 8.2" stroke="#555" stroke-width=".8"/></svg>
<div class="t" style="left:77.5px;top:503.11px;font-size:7.6px;color:#4a4a4a;transform:scale(0.8430,0.8874);transform-origin:0 6.30px;">українська</div>
<svg style="left:176.5px;top:502px;" width="9" height="10" viewBox="0 0 9 10"><circle cx="4.5" cy="1.8" r="1.2" fill="none" stroke="#333" stroke-width=".8"/><path d="M.8 3.6 L4.5 4.6 L8.2 3.6 M4.5 4.6 V6.4 M4.5 6.4 L2 9.4 M4.5 6.4 L7 9.4" fill="none" stroke="#333" stroke-width=".8"/><path d="M5.8 6.6 L8.4 9.2 M8.4 6.6 L5.8 9.2" stroke="#333" stroke-width=".7"/></svg>
<div class="t" style="left:187.5px;top:503.11px;font-size:7.6px;color:#222;font-weight:bold;transform:scale(0.8558,0.9725);transform-origin:0 6.30px;">Спеціальні можливості: щось не так</div>
<svg style="left:639.5px;top:502.5px;" width="9" height="9" viewBox="0 0 9 9"><path d="M.4 8.4 H8.6 M.4 6.4 H8.6 M1.6 4.4 H7.4 M3 4 L4.5 1.6 L6 4" fill="none" stroke="#444" stroke-width=".8"/></svg>
<div class="t" style="left:650.0px;top:503.38px;font-size:7.2px;color:#444;transform:scale(0.9030,0.9505);transform-origin:0 6.10px;">Нотатки</div>
<svg style="left:686.5px;top:502px;" width="10" height="10" viewBox="0 0 10 10"><path d="M.8 .8 H9.2 V6.4 H4.4 L2.2 8.6 V6.4 H.8z" fill="none" stroke="#444" stroke-width=".8" stroke-linejoin="round"/></svg>
<div class="t" style="left:698.0px;top:503.38px;font-size:7.2px;color:#444;transform:scale(0.8934,0.9404);transform-origin:0 6.10px;">Примітки</div>
<div style="left:738px;top:500px;width:25px;height:13px;background:#dadada;"></div>
<svg style="left:746px;top:503px;" width="9" height="8" viewBox="0 0 9 8"><rect x=".5" y=".5" width="8" height="6.6" fill="none" stroke="#3a3a3a" stroke-width=".8"/><path d="M3.2 .5 V7.1 M.5 2.6 H3.2 M.5 4.8 H3.2 M4.6 2.4 H7.2" stroke="#3a3a3a" stroke-width=".7"/></svg>
<svg style="left:771px;top:503px;" width="9" height="8" viewBox="0 0 9 8"><g fill="none" stroke="#444" stroke-width=".8"><rect x=".5" y=".5" width="3" height="2.6"/><rect x="5.2" y=".5" width="3" height="2.6"/><rect x=".5" y="4.6" width="3" height="2.6"/><rect x="5.2" y="4.6" width="3" height="2.6"/></g></svg>
<svg style="left:796px;top:503px;" width="10" height="8" viewBox="0 0 10 8"><path d="M.6 1 H4 Q5 1 5 2 V7 Q5 6.4 4 6.4 H.6z M9.4 1 H6 Q5 1 5 2 V7 Q5 6.4 6 6.4 H9.4z" fill="none" stroke="#444" stroke-width=".8"/></svg>
<svg style="left:821.5px;top:502.5px;" width="10" height="9" viewBox="0 0 10 9"><path d="M.4 .8 H9.6 M1.4 .8 V5.4 H8.6 V.8 M5 5.4 V7.6 M3 8.2 H7" fill="none" stroke="#444" stroke-width=".8"/></svg>
<div style="left:841px;top:506.6px;width:5px;height:0.8px;background:#444;"></div>
<div style="left:849px;top:506.6px;width:66px;height:0.8px;background:#8a8a8a;"></div>
<div style="left:881px;top:502.6px;width:2.4px;height:8.6px;background:#444;"></div>
<div style="left:916px;top:506.6px;width:5px;height:0.8px;background:#444;"></div>
<div style="left:918.0999999999999px;top:504.4px;width:0.8px;height:5.2px;background:#444;"></div>
<div class="t" style="left:931.0px;top:503.42px;font-size:7px;color:#444;transform:scaleX(1.0054);transform-origin:0 0;">100%</div>
<svg style="left:952.5px;top:502px;" width="10" height="10" viewBox="0 0 10 10"><rect x="2.6" y="2.6" width="4.8" height="4.8" fill="none" stroke="#444" stroke-width=".8"/><path d="M5 .2 V2.4 M5 7.6 V9.8 M.2 5 H2.4 M7.6 5 H9.8" stroke="#444" stroke-width=".8"/></svg>
<div style="left:429.5px;top:148.5px;width:211px;height:287px;background:linear-gradient(97deg,#f6cf7e 0%,#f6c673 35%,#f6b466 70%,#f5a45c 100%);overflow:hidden">
<div style="left:0;top:0;width:211px;height:287px;background:linear-gradient(180deg,rgba(255,240,190,.25) 0%,rgba(255,255,255,0) 40%,rgba(236,140,60,.22) 100%)"></div>
</div>
<div class="t" style="left:492.0px;top:181.17px;font-size:8.2px;color:#3a2a14;font-family:'Liberation Serif',serif;font-weight:bold;transform:scaleX(1.1278);transform-origin:0 0;">П. І. БАРВІНСЬКА</div>
<svg style="left:455px;top:188px;" width="160" height="154" viewBox="0 0 748 720">
<defs><filter id="mb" x="-2%" y="-2%" width="104%" height="104%"><feGaussianBlur stdDeviation="1.6"/></filter>
<clipPath id="mc"><rect x="40" y="40" width="664" height="649"/></clipPath></defs>
<rect x="36" y="36" width="671" height="656" fill="#fbf3d2"/>
<g clip-path="url(#mc)"><g filter="url(#mb)">
<rect x="36" y="36" width="672" height="656" fill="#bfe5ec"/>
<!-- russia -->
<path d="M282 36 H708 V478 Q680 470 650 484 Q628 470 606 448 Q580 430 556 426 Q540 404 516 404 Q500 430 470 436 Q440 436 424 416 Q400 396 384 372 Q356 346 330 332 L290 322 L252 302 L242 282 L292 252 Q304 226 298 200 L280 182 Q284 156 304 140 Q332 128 336 108 Q306 100 290 90 Q276 60 282 36z" fill="#d7e450"/>
<path d="M330 36 H708 V200 Q600 120 480 90 Q400 70 330 36z" fill="#d2e248"/>
<path d="M516 404 Q530 420 524 440 Q508 446 500 430z" fill="#d7e450"/>
<!-- norway / sweden / finland -->
<path d="M92 36 H192 Q186 70 172 92 Q150 112 120 114 Q98 112 96 96 Q110 70 92 36z" fill="#e2cc70"/>
<path d="M192 36 H252 Q256 70 246 104 Q236 150 220 174 Q200 190 186 178 Q170 150 166 120 Q170 100 172 92 Q186 70 192 36z" fill="#cdc2d6"/>
<path d="M252 36 H284 Q278 60 290 90 Q270 96 256 84z" fill="#dfe08a"/>
<path d="M110 186 Q130 172 150 184 Q166 200 156 214 Q130 220 114 208z" fill="#e6aeb6"/>
<path d="M120 214 Q150 206 200 212 L196 222 L126 224z" fill="#e6aeb6" opacity=".7"/>
<!-- germany -->
<path d="M62 262 Q80 236 104 230 Q130 214 152 216 Q180 232 204 240 Q240 250 292 252 L242 282 L252 302 L232 322 Q200 306 180 310 Q160 322 150 342 L160 380 Q130 392 110 392 Q84 384 70 370 Q58 350 60 330z" fill="#b7e1bd"/>
<!-- west edge -->
<path d="M40 246 Q62 240 72 262 Q78 300 70 330 L40 336z" fill="#5f5488"/>
<path d="M40 250 Q52 246 56 262 L52 300 L40 304z" fill="#39324f"/>
<path d="M40 336 L70 330 Q80 360 76 392 Q70 420 60 424 L40 428z" fill="#b79ad2"/>
<path d="M70 370 Q90 386 110 392 L104 408 Q84 412 72 400z" fill="#e8c4a8"/>
<!-- austria-hungary -->
<path d="M150 342 Q160 322 180 310 Q206 306 232 322 L252 302 L290 322 L330 332 Q356 346 384 372 Q384 400 372 420 Q356 440 340 452 Q318 462 300 462 Q278 470 262 472 Q244 486 230 492 Q212 482 200 470 Q184 452 170 442 Q152 428 140 420 Q124 408 110 400 Q136 392 160 380z" fill="#f1a65c"/>
<!-- romania -->
<path d="M340 452 Q356 440 372 420 Q392 428 402 444 Q414 466 408 484 Q388 500 366 500 Q340 498 322 490 Q326 470 340 452z" fill="#bab3e2"/>
<!-- italy -->
<path d="M60 424 Q84 412 110 400 Q128 410 140 420 Q146 440 152 462 Q166 490 182 512 Q204 540 222 562 Q238 584 242 602 Q232 614 220 610 Q204 596 190 580 Q170 556 150 530 Q130 500 110 472 Q86 456 66 452z" fill="#efe25e"/>
<path d="M58 530 Q74 524 80 544 Q82 570 70 582 Q58 576 56 554z" fill="#efe25e"/>
<path d="M168 624 Q200 616 240 622 L236 640 Q200 646 172 640z" fill="#efe25e" opacity=".8"/>
<!-- balkans -->
<path d="M200 470 Q212 482 230 492 Q244 486 262 472 L268 500 Q262 530 270 544 Q250 540 236 520 Q216 500 200 470z" fill="#d6c69e"/>
<path d="M266 480 Q290 470 318 490 L322 520 Q300 536 276 536 Q264 516 266 480z" fill="#c4e3a2"/>
<path d="M322 500 Q366 500 404 490 Q410 516 396 532 Q360 540 326 534z" fill="#a9a2da"/>
<path d="M270 544 Q300 536 330 540 Q346 570 340 604 Q330 640 318 652 Q300 640 290 620 Q276 584 270 544z" fill="#f0a274"/>
<path d="M262 540 L276 540 L290 620 L280 616z" fill="#7c2f36"/>
<!-- ottoman -->
<path d="M372 524 Q390 516 402 532 Q396 552 382 562 Q372 548 372 524z" fill="#b1b25c"/>
<path d="M382 562 Q402 540 424 532 Q448 522 474 520 Q500 504 524 500 Q564 496 602 500 Q628 488 652 482 Q682 486 708 500 V692 H640 Q634 664 620 652 Q590 640 560 642 Q540 660 520 660 Q494 652 470 650 Q448 642 430 640 Q410 628 400 610 Q386 590 382 562z" fill="#a8ab54"/>
<path d="M640 660 H708 V692 H636z" fill="#f7f7ee"/>
<!-- africa -->
<path d="M40 628 Q70 616 96 630 Q104 660 96 692 H40z" fill="#9a80c4"/>
<path d="M96 660 Q130 650 150 664 L150 692 H96z" fill="#bfe5ec"/>
</g>
<!-- white border line -->
<path d="M292 348 Q296 318 312 300 Q380 280 440 274 Q500 282 540 302 M300 372 Q330 392 366 388 Q400 376 412 402" fill="none" stroke="#f7f7e4" stroke-width="3" opacity=".9"/>
<!-- dotted lines -->
<g fill="none" stroke="#26261c" stroke-linecap="round">
<path d="M292 76 Q350 104 400 152 Q440 192 480 236 Q520 278 560 322 Q600 366 630 406 L652 432" stroke-width="9" stroke-dasharray="1 29"/>
<path d="M100 102 Q150 84 170 60 L186 44" stroke-width="7" stroke-dasharray="1 19"/>
<path d="M186 62 V176" stroke-width="7" stroke-dasharray="1 22"/>
<path d="M102 332 Q150 300 200 272 L266 248" stroke-width="7" stroke-dasharray="1 21"/>
<path d="M96 452 Q140 500 184 544" stroke-width="7" stroke-dasharray="1 21"/>
<path d="M296 560 Q310 600 320 636" stroke-width="6" stroke-dasharray="1 14"/>
<path d="M48 270 V420" stroke-width="7" stroke-dasharray="1 18" stroke="#2a2446"/>
</g>
<path d="M180 402 Q260 384 344 412" fill="none" stroke="#6a3a14" stroke-width="5" stroke-dasharray="7 6"/>
<path d="M316 470 Q350 462 380 470" fill="none" stroke="#4a3a6a" stroke-width="4" stroke-dasharray="6 5"/>
<path d="M330 512 Q360 504 390 500" fill="none" stroke="#3a3466" stroke-width="4" stroke-dasharray="6 5"/>
<g font-family="Liberation Sans,sans-serif" font-weight="bold" fill="#33331c">
<text x="400" y="596" font-size="15" letter-spacing="6.4">ОСМАНСЬКА ІМПЕРІЯ</text>
<text x="368" y="116" font-size="13">Петербург</text>
<text x="524" y="154" font-size="13">Москва</text>
<text x="492" y="184" font-size="11">Тула</text>
<text x="472" y="278" font-size="12">Київ</text>
<text x="434" y="364" font-size="12">Одеса</text>
<text x="420" y="318" font-size="11">Львів</text>
<text x="628" y="300" font-size="11">Ростов</text>
<text x="212" y="132" font-size="11">Стокгольм</text>
<text x="100" y="124" font-size="11">Осло</text>
<text x="148" y="210" font-size="11">Копенгаген</text>
<text x="148" y="292" font-size="11">Берлін</text>
<text x="238" y="302" font-size="11">Варшава</text>
<text x="172" y="346" font-size="11">Прага</text>
<text x="188" y="374" font-size="11">Відень</text>
<text x="258" y="468" font-size="11">Белград</text>
<text x="204" y="506" font-size="10">Сараєво</text>
<text x="326" y="496" font-size="10">Бухарест</text>
<text x="420" y="528" font-size="10">Стамбул</text>
<text x="176" y="640" font-size="10">Палермо</text>
<text x="120" y="668" font-size="9">Туніс</text>
<text x="476" y="548" font-size="10">Анкара</text>
<text x="572" y="664" font-size="10">Алеппо</text>
<text x="40" y="300" font-size="10">Париж</text>
</g>
</g>
</svg>
<div class="t" style="left:468.0px;top:340.36px;font-size:21.6px;color:#2a1c0e;font-weight:bold;letter-spacing:2.768px;transform:scaleX(0.79);transform-origin:0 0;-webkit-text-stroke:.3px #2a1c0e;">МІЖ НАУКОЮ</div>
<div class="t" style="left:467.0px;top:366.36px;font-size:21.6px;color:#2a1c0e;font-weight:bold;letter-spacing:2.496px;transform:scaleX(0.79);transform-origin:0 0;-webkit-text-stroke:.3px #2a1c0e;">І ПОЛІТИКОЮ</div>
<div class="t" style="left:487.0px;top:389.73px;font-size:6.4px;color:#3a2a18;font-family:'Liberation Serif',serif;font-weight:bold;transform:scaleX(1.0754);transform-origin:0 0;">Інтерпретації Східної Європи</div>
<div class="t" style="left:447.5px;top:398.13px;font-size:6.4px;color:#3a2a18;font-family:'Liberation Serif',serif;font-weight:bold;transform:scaleX(1.0766);transform-origin:0 0;">в академічному середовищі німецькомовного простору</div>
<div class="t" style="left:491.5px;top:406.13px;font-size:6.4px;color:#3a2a18;font-family:'Liberation Serif',serif;font-weight:bold;transform:scaleX(1.0320);transform-origin:0 0;">у кінці XIX – початку XXI ст.</div>
<div style="left:5px;top:50px;width:955px;height:81px;background:#fbfbfb;border-radius:5px;box-shadow:0 .5px 2px rgba(0,0,0,.22);overflow:hidden;"></div>
<div style="left:5px;top:111.6px;width:955px;height:19.4px;background:#fdf3cd;border-radius:0 0 5px 5px;"></div>
<svg style="left:20px;top:53px;" width="22" height="22" viewBox="0 0 22 22"><rect x="3" y="4" width="12.4" height="15.4" rx="1.2" fill="#fff" stroke="#e0a248" stroke-width="1.3"/><path d="M6.4 4.4 Q6.4 2 9.2 2 Q12 2 12 4.4 V5.6 H6.4z" fill="#fff" stroke="#8a8a8a" stroke-width="1"/><rect x="10.4" y="9" width="9" height="11.4" rx="1" fill="#fff" stroke="#7a7a7a" stroke-width="1.1"/></svg>
<div class="t" style="left:13.7px;top:76.29px;font-size:9.3px;color:#3b3b3b;transform:scale(0.7870,0.8284);transform-origin:0 7.65px;">Вставити</div>
<svg style="left:26.30000000000001px;top:88.30000000000001px;" width="6" height="4" viewBox="0 0 6 4"><path d="M1 .9 L3 2.9 L5 .9" fill="none" stroke="#444" stroke-width="1" stroke-linecap="round" stroke-linejoin="round"/></svg>
<svg style="left:50px;top:53.5px;" width="10" height="11" viewBox="0 0 10 11"><path d="M2.6 1 L6.4 7 M7.4 1 L3.6 7" stroke="#5a5a5a" stroke-width=".9"/><circle cx="2.8" cy="8.6" r="1.5" fill="none" stroke="#2a7bd0" stroke-width=".9"/><circle cx="7.2" cy="8.6" r="1.5" fill="none" stroke="#2a7bd0" stroke-width=".9"/></svg>
<svg style="left:49.5px;top:69.5px;" width="12" height="12" viewBox="0 0 12 12"><path d="M1.4 1 H6.4 V8.4 H1.4z" fill="#fff" stroke="#555" stroke-width=".9"/><path d="M4.4 3.6 H8 L10 5.6 V11 H4.4z" fill="#fff" stroke="#555" stroke-width=".9"/><path d="M6 8.6 h2.4" stroke="#555" stroke-width=".7"/></svg>
<svg style="left:67px;top:73.6px;" width="6" height="4" viewBox="0 0 6 4"><path d="M1 .9 L3 2.9 L5 .9" fill="none" stroke="#444" stroke-width="1" stroke-linecap="round" stroke-linejoin="round"/></svg>
<svg style="left:49.5px;top:85.5px;" width="12" height="12" viewBox="0 0 12 12"><path d="M7 1.2 L10.6 4.8 L8.6 6.4 L5.4 3.2z" fill="#e9a33a"/><path d="M5.2 3.6 L8.2 6.6 L4.4 10.6 Q2.6 10.8 1 9 Z" fill="#e06a2c"/><path d="M9.2 .8 L11 2.6" stroke="#666" stroke-width="1.2"/></svg>
<div class="t" style="left:18.5px;top:101.74px;font-size:7.4px;color:#444;transform:scale(0.8756,0.9217);transform-origin:0 6.20px;">Буфер обміну</div>
<svg style="left:75px;top:103.19999999999999px;" width="6" height="6" viewBox="0 0 6 6"><path d="M.5 .5 H4.5 M.5 .5 V4.5 M2.2 2.2 L5.5 5.5 M5.5 3 V5.5 H3" fill="none" stroke="#777" stroke-width=".7"/></svg>
<div style="left:82px;top:56px;width:1px;height:52px;background:#dcdcdc;"></div>
<svg style="left:93px;top:52.5px;" width="24" height="21" viewBox="0 0 24 21"><rect x="4.4" y="5" width="16.6" height="13.4" fill="#f4f4f4" stroke="#858585" stroke-width="1.9"/><path d="M4.4 9.8 H21 M10.2 9.8 V18.4" stroke="#858585" stroke-width="1.5"/><path d="M5.4 .6 V8.4 M1.4 4.6 H9.4" stroke="#3aa456" stroke-width="1.5"/></svg>
<div class="t" style="left:89.0px;top:75.69px;font-size:9.3px;color:#3b3b3b;transform:scale(0.8087,0.8513);transform-origin:0 7.65px;">Створити</div>
<div class="t" style="left:92.0px;top:85.69px;font-size:9.3px;color:#3b3b3b;transform:scale(0.7151,0.7527);transform-origin:0 7.65px;">слайд</div>
<svg style="left:113px;top:88.6px;" width="6" height="4" viewBox="0 0 6 4"><path d="M1 .9 L3 2.9 L5 .9" fill="none" stroke="#444" stroke-width="1" stroke-linecap="round" stroke-linejoin="round"/></svg>
<svg style="left:126.5px;top:55px;" width="10" height="8" viewBox="0 0 10 8"><rect x=".7" y=".7" width="8.6" height="6.8" fill="#f2f2f2" stroke="#777" stroke-width="1.3"/><rect x=".2" y=".2" width="9.6" height="2.6" fill="#777"/><rect x="2" y="4" width="2.4" height="1.8" fill="#8a8a8a"/><rect x="5.6" y="4" width="2.4" height="1.8" fill="#8a8a8a"/></svg>
<div class="t" style="left:139.8px;top:54.70px;font-size:8.7px;color:#3b3b3b;transform:scale(0.8407,0.8849);transform-origin:0 7.35px;">Макет</div>
<svg style="left:162px;top:57.400000000000006px;" width="6" height="4" viewBox="0 0 6 4"><path d="M1 .9 L3 2.9 L5 .9" fill="none" stroke="#444" stroke-width="1" stroke-linecap="round" stroke-linejoin="round"/></svg>
<svg style="left:126.5px;top:70.5px;" width="10" height="9" viewBox="0 0 10 9"><rect x=".6" y="1.6" width="8.8" height="6.8" fill="#fff" stroke="#555" stroke-width=".9"/><path d="M1 3 Q3 .2 5.4 1.6 M.6 .6 V3 H3" fill="none" stroke="#2a7bd0" stroke-width=".9"/><path d="M5 4 V8" stroke="#555" stroke-width=".8"/></svg>
<div class="t" style="left:139.6px;top:70.70px;font-size:8.7px;color:#3b3b3b;transform:scale(0.8468,0.8913);transform-origin:0 7.35px;">Скинути</div>
<svg style="left:126.5px;top:87px;" width="10" height="9" viewBox="0 0 10 9"><rect x=".7" y=".7" width="8.6" height="7.8" fill="#f6f6f6" stroke="#777" stroke-width="1.3"/><rect x=".2" y=".2" width="9.6" height="2.2" fill="#6aa882"/><rect x="2.2" y="4.2" width="5.6" height="3" fill="#777"/></svg>
<div class="t" style="left:139.8px;top:86.80px;font-size:8.7px;color:#3b3b3b;transform:scale(0.8293,0.8729);transform-origin:0 7.35px;">Розділ</div>
<svg style="left:163px;top:89.80000000000001px;" width="6" height="4" viewBox="0 0 6 4"><path d="M1 .9 L3 2.9 L5 .9" fill="none" stroke="#444" stroke-width="1" stroke-linecap="round" stroke-linejoin="round"/></svg>
<div class="t" style="left:120.0px;top:101.74px;font-size:7.4px;color:#444;transform:scale(0.8193,0.8625);transform-origin:0 6.20px;">Слайди</div>
<div style="left:179.3px;top:56px;width:1px;height:52px;background:#dcdcdc;"></div>
<div style="left:185px;top:56px;width:104.4px;height:15.4px;background:#ececec;border-radius:3px 0 0 3px;"></div>
<div style="left:290.3px;top:56px;width:29.2px;height:15.4px;background:#ececec;border-radius:0 3px 3px 0;"></div>
<svg style="left:281.5px;top:62px;" width="6" height="4" viewBox="0 0 6 4"><path d="M1 .9 L3 2.9 L5 .9" fill="none" stroke="#c2c2c2" stroke-width="1" stroke-linecap="round" stroke-linejoin="round"/></svg>
<svg style="left:312px;top:62px;" width="6" height="4" viewBox="0 0 6 4"><path d="M1 .9 L3 2.9 L5 .9" fill="none" stroke="#c2c2c2" stroke-width="1" stroke-linecap="round" stroke-linejoin="round"/></svg>
<div class="t" style="left:292.2px;top:59.94px;font-size:8.5px;color:#b4b4b4;transform:scaleX(0.9836);transform-origin:0 0;">60</div>
<div class="t" style="left:324.0px;top:57.47px;font-size:10.5px;color:#a9a9a9;transform:scaleX(0.9995);transform-origin:0 0;">A</div>
<div class="t" style="left:331.2px;top:56.48px;font-size:5px;color:#a9a9a9;transform:scale(0.8219,0.8652);transform-origin:0 4.50px;">+</div>
<div class="t" style="left:341.0px;top:58.67px;font-size:10px;color:#a9a9a9;transform:scaleX(0.9895);transform-origin:0 0;">A</div>
<div class="t" style="left:348.0px;top:57.08px;font-size:5px;color:#a9a9a9;transform:scaleX(1.2010);transform-origin:0 0;">-</div>
<div style="left:353px;top:57px;width:1px;height:15px;background:#e2e2e2;"></div>
<div class="t" style="left:357.0px;top:57.47px;font-size:10.5px;color:#a9a9a9;transform:scale(0.9423,0.9919);transform-origin:0 9.25px;">A</div>
<svg style="left:362.5px;top:62px;" width="6" height="6" viewBox="0 0 6 6"><path d="M2.6 .6 L5.4 3.4 L3.4 5.4 L.6 2.6z" fill="none" stroke="#b0b0b0" stroke-width=".8"/></svg>
<div class="t" style="left:188.6px;top:79.36px;font-size:9.5px;color:#9a9a9a;font-weight:bold;transform:scaleX(0.9317);transform-origin:0 0;">Ж</div>
<div class="t" style="left:205.5px;top:79.36px;font-size:9.5px;color:#a9a9a9;font-style:italic;transform:scaleX(0.9823);transform-origin:0 0;">К</div>
<svg style="left:221.39999999999998px;top:80px;" width="6" height="9" viewBox="0 0 6 9"><rect x=".6" y=".6" width="4.6" height="7.2" fill="none" stroke="#b0b0b0" stroke-width=".9"/></svg>
<div class="t" style="left:237.5px;top:79.36px;font-size:9.5px;color:#a2a2a2;font-weight:bold;transform:scale(0.8679,0.9863);transform-origin:0 8.25px;">S</div>
<div class="t" style="left:251.8px;top:81.43px;font-size:8px;color:#a9a9a9;transform:scaleX(0.9889);transform-origin:0 0;">ab</div>
<div style="left:251.3px;top:85.4px;width:10px;height:0.8px;background:#a9a9a9;"></div>
<div class="t" style="left:267.5px;top:78.28px;font-size:8.3px;color:#a9a9a9;transform:scaleX(1.0041);transform-origin:0 0;">AV</div>
<div style="left:268px;top:88px;width:9.5px;height:0.7px;background:#b5b5b5;"></div>
<svg style="left:281px;top:82px;" width="6" height="4" viewBox="0 0 6 4"><path d="M1 .9 L3 2.9 L5 .9" fill="none" stroke="#bdbdbd" stroke-width="1" stroke-linecap="round" stroke-linejoin="round"/></svg>
<div class="t" style="left:294.0px;top:80.19px;font-size:8.8px;color:#a9a9a9;transform:scaleX(0.9755);transform-origin:0 0;">Aa</div>
<svg style="left:307px;top:82px;" width="6" height="4" viewBox="0 0 6 4"><path d="M1 .9 L3 2.9 L5 .9" fill="none" stroke="#bdbdbd" stroke-width="1" stroke-linecap="round" stroke-linejoin="round"/></svg>
<div style="left:318px;top:77px;width:1px;height:14px;background:#e0e0e0;"></div>
<svg style="left:321.5px;top:78.30000000000001px;" width="11" height="12" viewBox="0 0 11 12"><path d="M3 7.4 L7.6 1.6 L9.6 3.2 L5 9z M3 7.4 L2.4 9.6 L5 9" fill="none" stroke="#9e9e9e" stroke-width=".9" stroke-linejoin="round"/><rect x=".8" y="10" width="9.4" height="1.6" fill="#b0b0b0"/></svg>
<svg style="left:335.5px;top:82px;" width="6" height="4" viewBox="0 0 6 4"><path d="M1 .9 L3 2.9 L5 .9" fill="none" stroke="#bdbdbd" stroke-width="1" stroke-linecap="round" stroke-linejoin="round"/></svg>
<div class="t" style="left:348.6px;top:77.86px;font-size:10px;color:#a9a9a9;transform:scaleX(1.0494);transform-origin:0 0;">A</div>
<div style="left:347.5px;top:88.4px;width:9.6px;height:1.5px;background:#a9a9a9;"></div>
<svg style="left:361px;top:82px;" width="6" height="4" viewBox="0 0 6 4"><path d="M1 .9 L3 2.9 L5 .9" fill="none" stroke="#bdbdbd" stroke-width="1" stroke-linecap="round" stroke-linejoin="round"/></svg>
<div class="t" style="left:261.0px;top:101.74px;font-size:7.4px;color:#444;transform:scale(0.8625,0.9079);transform-origin:0 6.20px;">Шрифт</div>
<svg style="left:366px;top:103.19999999999999px;" width="6" height="6" viewBox="0 0 6 6"><path d="M.5 .5 H4.5 M.5 .5 V4.5 M2.2 2.2 L5.5 5.5 M5.5 3 V5.5 H3" fill="none" stroke="#777" stroke-width=".7"/></svg>
<div style="left:374px;top:56px;width:1px;height:52px;background:#dcdcdc;"></div>
<svg style="left:381.5px;top:58.5px;" width="10" height="10" viewBox="0 0 10 10"><g stroke="#b0b0b0" stroke-width=".9"><path d="M3.4 1.4 H10 M3.4 5 H10 M3.4 8.6 H10"/></g><g fill="#b0b0b0"><rect x="0" y=".8" width="1.4" height="1.3"/><rect x="0" y="4.4" width="1.4" height="1.3"/><rect x="0" y="8" width="1.4" height="1.3"/></g></svg>
<svg style="left:395.5px;top:62px;" width="6" height="4" viewBox="0 0 6 4"><path d="M1 .9 L3 2.9 L5 .9" fill="none" stroke="#bdbdbd" stroke-width="1" stroke-linecap="round" stroke-linejoin="round"/></svg>
<svg style="left:407.79999999999995px;top:58.5px;" width="10" height="10" viewBox="0 0 10 10"><g stroke="#b0b0b0" stroke-width=".9"><path d="M3.4 1.4 H10 M3.4 5 H10 M3.4 8.6 H10"/></g><g fill="#b0b0b0"><rect x="0" y=".8" width="1.4" height="1.3"/><rect x="0" y="4.4" width="1.4" height="1.3"/><rect x="0" y="8" width="1.4" height="1.3"/></g></svg>
<svg style="left:421.29999999999995px;top:62px;" width="6" height="4" viewBox="0 0 6 4"><path d="M1 .9 L3 2.9 L5 .9" fill="none" stroke="#bdbdbd" stroke-width="1" stroke-linecap="round" stroke-linejoin="round"/></svg>
<svg style="left:433px;top:58.5px;" width="10" height="10" viewBox="0 0 10 10"><g stroke="#b0b0b0" stroke-width=".9"><path d="M0 1 H10 M4.4 3.8 H10 M4.4 6.4 H10 M0 9.2 H10"/><path d="M.4 5.1 H3.2" /></g></svg>
<svg style="left:449.20000000000005px;top:58.5px;" width="10" height="10" viewBox="0 0 10 10"><g stroke="#b0b0b0" stroke-width=".9"><path d="M0 1 H10 M4.4 3.8 H10 M4.4 6.4 H10 M0 9.2 H10"/><path d="M.4 5.1 H3.2" /></g></svg>
<svg style="left:465.6px;top:58.5px;" width="11" height="10" viewBox="0 0 11 10"><g stroke="#b0b0b0" stroke-width=".9" fill="none"><path d="M4.4 1.4 H10.6 M4.4 5 H10.6 M4.4 8.6 H10.6 M1.6 .8 V9.2 M.2 2.4 L1.6 .8 L3 2.4 M.2 7.6 L1.6 9.2 L3 7.6"/></g></svg>
<svg style="left:478.4px;top:62px;" width="6" height="4" viewBox="0 0 6 4"><path d="M1 .9 L3 2.9 L5 .9" fill="none" stroke="#bdbdbd" stroke-width="1" stroke-linecap="round" stroke-linejoin="round"/></svg>
<svg style="left:492.5px;top:54px;" width="10" height="11" viewBox="0 0 10 11"><g stroke="#b0b0b0" stroke-width=".9" fill="none"><path d="M2 .6 V9.6 M.4 8 L2 9.8 L3.6 8 M5.4 8 L7.4 2 L9.4 8 M6 6 H8.8"/></g></svg>
<svg style="left:504.5px;top:57.400000000000006px;" width="6" height="4" viewBox="0 0 6 4"><path d="M1 .9 L3 2.9 L5 .9" fill="none" stroke="#bdbdbd" stroke-width="1" stroke-linecap="round" stroke-linejoin="round"/></svg>
<svg style="left:491.5px;top:70px;" width="11" height="10" viewBox="0 0 11 10"><g stroke="#b0b0b0" stroke-width=".9" fill="none"><path d="M3 .8 H.8 V9.2 H3 M8 .8 H10.2 V9.2 H8 M5.5 2 V8 M3.4 5 H7.6"/></g></svg>
<svg style="left:504.5px;top:73.5px;" width="6" height="4" viewBox="0 0 6 4"><path d="M1 .9 L3 2.9 L5 .9" fill="none" stroke="#bdbdbd" stroke-width="1" stroke-linecap="round" stroke-linejoin="round"/></svg>
<svg style="left:491.5px;top:86px;" width="11" height="10" viewBox="0 0 11 10"><g stroke="#b0b0b0" stroke-width=".9" fill="#d9d9d9"><path d="M.8 2 L4 .6 L6.6 2.4 L3.4 4z"/><path d="M3.6 5 H10 V9.4 H3.6z"/><path d="M5.2 3.6 H8.4 V5"/></g></svg>
<svg style="left:504.5px;top:89.6px;" width="6" height="4" viewBox="0 0 6 4"><path d="M1 .9 L3 2.9 L5 .9" fill="none" stroke="#bdbdbd" stroke-width="1" stroke-linecap="round" stroke-linejoin="round"/></svg>
<svg style="left:382.0px;top:78px;" width="10" height="10" viewBox="0 0 10 10"><path d="M0 1 H10 M0 3.7 H6.5 M0 6.4 H10 M0 9.1 H6.5" stroke="#a8a8a8" stroke-width=".9"/></svg>
<svg style="left:398.20000000000005px;top:78px;" width="10" height="10" viewBox="0 0 10 10"><path d="M0 1 H10 M1.8 3.7 H8.2 M0 6.4 H10 M1.8 9.1 H8.2" stroke="#a8a8a8" stroke-width=".9"/></svg>
<svg style="left:414.4px;top:78px;" width="10" height="10" viewBox="0 0 10 10"><path d="M0 1 H10 M3.5 3.7 H10 M0 6.4 H10 M3.5 9.1 H10" stroke="#a8a8a8" stroke-width=".9"/></svg>
<svg style="left:430.6px;top:78px;" width="10" height="10" viewBox="0 0 10 10"><path d="M0 1 H10 M0 3.7 H10 M0 6.4 H10 M0 9.1 H10" stroke="#a8a8a8" stroke-width=".9"/></svg>
<div style="left:443.5px;top:77px;width:1px;height:14px;background:#e0e0e0;"></div>
<svg style="left:448.5px;top:79px;" width="9" height="8" viewBox="0 0 9 8"><path d="M0 1 H3.6 M0 3.8 H3.6 M0 6.6 H3.6 M5.2 1 H8.8 M5.2 3.8 H8.8 M5.2 6.6 H8.8" stroke="#c2c2c2" stroke-width=".9"/></svg>
<svg style="left:460.5px;top:82px;" width="6" height="4" viewBox="0 0 6 4"><path d="M1 .9 L3 2.9 L5 .9" fill="none" stroke="#c9c9c9" stroke-width="1" stroke-linecap="round" stroke-linejoin="round"/></svg>
<div class="t" style="left:432.5px;top:101.74px;font-size:7.4px;color:#444;transform:scale(0.8912,0.9381);transform-origin:0 6.20px;">Абзац</div>
<svg style="left:510.5px;top:103.19999999999999px;" width="6" height="6" viewBox="0 0 6 6"><path d="M.5 .5 H4.5 M.5 .5 V4.5 M2.2 2.2 L5.5 5.5 M5.5 3 V5.5 H3" fill="none" stroke="#777" stroke-width=".7"/></svg>
<div style="left:519.4px;top:56px;width:1px;height:52px;background:#dcdcdc;"></div>
<svg style="left:527px;top:53px;" width="21" height="21" viewBox="0 0 21 21"><rect x="1.2" y="1.2" width="11.6" height="11.4" fill="#5ea3e6" stroke="#2a74c4" stroke-width="1"/><circle cx="12.6" cy="12.4" r="6.6" fill="#fff" stroke="#5a5a5a" stroke-width="1.2"/></svg>
<div class="t" style="left:525.8px;top:76.09px;font-size:9.3px;color:#3b3b3b;transform:scale(0.8345,0.8784);transform-origin:0 7.65px;">Фігури</div>
<svg style="left:534.2px;top:88.5px;" width="6" height="4" viewBox="0 0 6 4"><path d="M1 .9 L3 2.9 L5 .9" fill="none" stroke="#444" stroke-width="1" stroke-linecap="round" stroke-linejoin="round"/></svg>
<svg style="left:567px;top:53px;" width="21" height="21" viewBox="0 0 21 21"><rect x="4.6" y="4.4" width="12" height="12" fill="#f3c877" stroke="#d79a2e" stroke-width="1"/><rect x="1.2" y="1.2" width="6.6" height="6.6" fill="#fff" stroke="#5a5a5a" stroke-width="1"/><rect x="13" y="12.8" width="6.6" height="6.6" fill="#fff" stroke="#5a5a5a" stroke-width="1"/></svg>
<div class="t" style="left:553.0px;top:76.09px;font-size:9.3px;color:#3b3b3b;transform:scale(0.8228,0.8661);transform-origin:0 7.65px;">Упорядкувати</div>
<svg style="left:574px;top:88.5px;" width="6" height="4" viewBox="0 0 6 4"><path d="M1 .9 L3 2.9 L5 .9" fill="none" stroke="#444" stroke-width="1" stroke-linecap="round" stroke-linejoin="round"/></svg>
<svg style="left:610.5px;top:53px;" width="21" height="21" viewBox="0 0 21 21"><rect x="1.4" y="1.4" width="17.4" height="17.4" rx="2.2" fill="#f1f1f1" stroke="#c6c6c6" stroke-width="1.1"/><path d="M7 17 Q8 13.6 10.4 13 L17.6 5.4 L19 6.8 L11.8 14.6 Q11 17 7 17z" fill="#e4e4e4" stroke="#b4b4b4" stroke-width=".9"/></svg>
<div class="t" style="left:605.8px;top:75.89px;font-size:9.3px;color:#b6b6b6;transform:scale(0.7915,0.8332);transform-origin:0 7.65px;">Експрес-</div>
<div class="t" style="left:609.0px;top:85.69px;font-size:9.3px;color:#b6b6b6;transform:scale(0.8103,0.8529);transform-origin:0 7.65px;">стилі</div>
<svg style="left:628px;top:89px;" width="6" height="4" viewBox="0 0 6 4"><path d="M1 .9 L3 2.9 L5 .9" fill="none" stroke="#c2c2c2" stroke-width="1" stroke-linecap="round" stroke-linejoin="round"/></svg>
<svg style="left:641.5px;top:54.5px;" width="10" height="10" viewBox="0 0 10 10"><path d="M2.2 5 L5 1.4 L8 5 L5 7.4z M7.6 5.4 Q9.2 7 8.2 8" fill="none" stroke="#b0b0b0" stroke-width=".9"/><rect x=".6" y="8.4" width="8.8" height="1.4" fill="#bdbdbd"/></svg>
<div class="t" style="left:654.6px;top:54.90px;font-size:8.7px;color:#bdbdbd;transform:scale(0.8339,0.8778);transform-origin:0 7.35px;">Заливка фігури</div>
<svg style="left:708px;top:58px;" width="6" height="4" viewBox="0 0 6 4"><path d="M1 .9 L3 2.9 L5 .9" fill="none" stroke="#c9c9c9" stroke-width="1" stroke-linecap="round" stroke-linejoin="round"/></svg>
<svg style="left:641.5px;top:70.5px;" width="10" height="10" viewBox="0 0 10 10"><path d="M.8 1.6 H6 M.8 1.6 V7.4 H8 V5" fill="none" stroke="#b0b0b0" stroke-width=".9"/><path d="M3.4 6 L8 1 L9.2 2.2 L4.6 7z" fill="none" stroke="#b0b0b0" stroke-width=".8"/><rect x=".6" y="8.6" width="8.8" height="1.2" fill="#bdbdbd"/></svg>
<div class="t" style="left:654.6px;top:70.90px;font-size:8.7px;color:#bdbdbd;transform:scale(0.8564,0.9015);transform-origin:0 7.35px;">Контур фігури</div>
<svg style="left:704.6px;top:74px;" width="6" height="4" viewBox="0 0 6 4"><path d="M1 .9 L3 2.9 L5 .9" fill="none" stroke="#c9c9c9" stroke-width="1" stroke-linecap="round" stroke-linejoin="round"/></svg>
<svg style="left:641.5px;top:86.5px;" width="10" height="10" viewBox="0 0 10 10"><path d="M1 5.4 L3.4 1.6 H9 L6.8 5.4z" fill="#ececec" stroke="#a8a8a8" stroke-width=".9"/><path d="M1 5.4 V7.4 Q1 8.6 2.4 8.6 H6 L8.6 5 L9 1.8" fill="none" stroke="#a8a8a8" stroke-width=".9"/></svg>
<div class="t" style="left:654.6px;top:86.90px;font-size:8.7px;color:#bdbdbd;transform:scale(0.8017,0.8438);transform-origin:0 7.35px;">Ефекти для фігур</div>
<svg style="left:714px;top:90px;" width="6" height="4" viewBox="0 0 6 4"><path d="M1 .9 L3 2.9 L5 .9" fill="none" stroke="#c9c9c9" stroke-width="1" stroke-linecap="round" stroke-linejoin="round"/></svg>
<div class="t" style="left:601.5px;top:101.74px;font-size:7.4px;color:#444;transform:scale(0.8792,0.9255);transform-origin:0 6.20px;">Малювання</div>
<svg style="left:722.5px;top:103.19999999999999px;" width="6" height="6" viewBox="0 0 6 6"><path d="M.5 .5 H4.5 M.5 .5 V4.5 M2.2 2.2 L5.5 5.5 M5.5 3 V5.5 H3" fill="none" stroke="#777" stroke-width=".7"/></svg>
<div style="left:730.8px;top:56px;width:1px;height:52px;background:#dcdcdc;"></div>
<svg style="left:737.5px;top:54px;" width="11" height="11" viewBox="0 0 11 11"><circle cx="6.6" cy="4.4" r="3.4" fill="none" stroke="#444" stroke-width="1"/><path d="M4.2 6.8 L.8 10.2" stroke="#444" stroke-width="1.1" stroke-linecap="round"/></svg>
<div class="t" style="left:751.0px;top:54.80px;font-size:8.7px;color:#3b3b3b;transform:scale(0.8321,0.8759);transform-origin:0 7.35px;">Знайти</div>
<svg style="left:736.5px;top:69.5px;" width="12" height="12" viewBox="0 0 12 12"><path d="M2 3 Q2 .8 4.4 1.2 M1 4.4 L2 6 L3.4 4.6" fill="none" stroke="#2a7bd0" stroke-width=".9"/><text x="6.4" y="5" font-size="6" font-family="Liberation Sans,sans-serif" fill="#8a3ab0">b</text><text x="6.6" y="11" font-size="6" font-family="Liberation Sans,sans-serif" fill="#2a7bd0">c</text><text x="1" y="11" font-size="5.5" font-family="Liberation Sans,sans-serif" fill="#8a3ab0">a</text></svg>
<div class="t" style="left:751.0px;top:70.80px;font-size:8.7px;color:#3b3b3b;transform:scale(0.8763,0.9224);transform-origin:0 7.35px;">Замінити</div>
<svg style="left:793px;top:73.80000000000001px;" width="6" height="4" viewBox="0 0 6 4"><path d="M1 .9 L3 2.9 L5 .9" fill="none" stroke="#444" stroke-width="1" stroke-linecap="round" stroke-linejoin="round"/></svg>
<svg style="left:737.5px;top:85.5px;" width="10" height="12" viewBox="0 0 10 12"><path d="M2 1 L2 9.6 L4.4 7.4 L6 11 L7.4 10.4 L5.8 6.8 L8.8 6.6z" fill="#fff" stroke="#444" stroke-width=".9" stroke-linejoin="round"/></svg>
<div class="t" style="left:751.0px;top:86.80px;font-size:8.7px;color:#3b3b3b;transform:scale(0.8504,0.8952);transform-origin:0 7.35px;">Виділити</div>
<svg style="left:783.3px;top:90px;" width="6" height="4" viewBox="0 0 6 4"><path d="M1 .9 L3 2.9 L5 .9" fill="none" stroke="#444" stroke-width="1" stroke-linecap="round" stroke-linejoin="round"/></svg>
<div class="t" style="left:751.0px;top:101.74px;font-size:7.4px;color:#444;transform:scale(0.8452,0.8897);transform-origin:0 6.20px;">Редагування</div>
<div style="left:808.5px;top:56px;width:1px;height:52px;background:#dcdcdc;"></div>
<svg style="left:825px;top:53px;" width="20" height="20" viewBox="0 0 20 20"><rect x=".8" y=".8" width="18" height="18.6" rx="1.6" fill="#fbe2d8" stroke="#e8896a" stroke-width="1.2"/><g fill="#fff" stroke="#e0714e" stroke-width="1.1"><rect x="3.4" y="3.6" width="5.4" height="5.4"/><rect x="10.8" y="3.6" width="5.4" height="5.4"/><rect x="3.4" y="11" width="5.4" height="5.4"/><rect x="10.8" y="11" width="5.4" height="5.4"/></g></svg>
<div class="t" style="left:815.8px;top:75.89px;font-size:9.3px;color:#3b3b3b;transform:scale(0.8040,0.8463);transform-origin:0 7.65px;">Надбудови</div>
<div class="t" style="left:818.0px;top:101.74px;font-size:7.4px;color:#444;transform:scale(0.8729,0.9188);transform-origin:0 6.20px;">Надбудови</div>
<div style="left:860.4px;top:56px;width:1px;height:52px;background:#dcdcdc;"></div>
<svg style="left:947px;top:100.5px;" width="9" height="6" viewBox="0 0 9 6"><path d="M1.2 1.2 L4.5 4.5 L7.8 1.2" fill="none" stroke="#444" stroke-width="1" stroke-linecap="round" stroke-linejoin="round"/></svg>
<svg style="left:12px;top:116px;" width="10" height="10" viewBox="0 0 10 10"><circle cx="5" cy="5" r="4.2" fill="none" stroke="#d13438" stroke-width=".9"/><path d="M3.3 3.3 L6.7 6.7 M6.7 3.3 L3.3 6.7" stroke="#d13438" stroke-width=".9"/></svg>
<div class="t" style="left:27.3px;top:116.84px;font-size:8.5px;color:#1e1e1e;font-weight:bold;transform:scale(0.8618,0.9793);transform-origin:0 7.25px;">ПЕРЕДАВАННЯ ЗАБЛОКОВАНО</div>
<div class="t" style="left:150.0px;top:116.86px;font-size:8.4px;color:#2a2a2a;transform:scale(0.9057,0.9534);transform-origin:0 7.20px;text-decoration:underline;text-decoration-thickness:.7px;text-underline-offset:1px;">Виникла проблема з цим файлом. Не вдалося зберегти нові зміни. Збережіть копію, щоб не втратити результати роботи.</div>
<div style="left:585.3px;top:113.6px;width:65.7px;height:15.6px;background:#fefefe;border-radius:3px;box-shadow:0 0 0 .8px #cfc9b6;"></div>
<div class="t" style="left:591.0px;top:116.96px;font-size:8.4px;color:#2a2a2a;transform:scale(0.9168,0.9651);transform-origin:0 7.20px;">Зберегти копію</div>
<svg style="left:946.5px;top:117.5px;" width="8" height="8" viewBox="0 0 8 8"><path d="M1 1 L7 7 M7 1 L1 7" stroke="#333" stroke-width="1"/></svg>
</div>
<!-- ZOOM TOOLBAR -->
<div id="ztool"></div>
<svg style="left:33.5px;top:645.5px;" width="21" height="21" viewBox="0 0 24 24"><rect x="9" y="2.4" width="6" height="11.4" rx="3" stroke="#fff" stroke-width="1.5" fill="none" stroke-linecap="round" stroke-linejoin="round"/><path d="M5.6 11 Q5.6 17 12 17 Q18.4 17 18.4 11 M12 17 V20.6 M8.6 21 H15.4" stroke="#fff" stroke-width="1.5" fill="none" stroke-linecap="round" stroke-linejoin="round"/><path d="M2.6 21 L21.6 2.6" stroke="#e8195c" stroke-width="2.2" stroke-linecap="round"/></svg>
<svg style="left:65px;top:652.5px;" width="10" height="6" viewBox="0 0 10 6"><path d="M1.6 4.6 L5 1.6 L8.4 4.6" fill="none" stroke="#fff" stroke-width="1.5" stroke-linecap="round" stroke-linejoin="round"/></svg>
<div class="t" style="left:33.5px;top:670.54px;font-size:10.7px;color:#fff;font-weight:bold;transform:scale(0.8635,0.9812);transform-origin:0 9.35px;">Звук</div>
<svg style="left:109px;top:646px;" width="26" height="20" viewBox="0 0 26 20"><rect x="2" y="3" width="15" height="14" rx="3.6" stroke="#fff" stroke-width="1.5" fill="none" stroke-linecap="round" stroke-linejoin="round"/><path d="M17.4 9 L23.6 4.8 V15.2 L17.4 11z" stroke="#fff" stroke-width="1.5" fill="none" stroke-linecap="round" stroke-linejoin="round"/></svg>
<svg style="left:147px;top:652.5px;" width="10" height="6" viewBox="0 0 10 6"><path d="M1.6 4.6 L5 1.6 L8.4 4.6" fill="none" stroke="#fff" stroke-width="1.5" stroke-linecap="round" stroke-linejoin="round"/></svg>
<div class="t" style="left:107.0px;top:670.54px;font-size:10.7px;color:#fff;font-weight:bold;transform:scale(0.8635,0.9812);transform-origin:0 9.35px;">Видео</div>
<svg style="left:363.5px;top:647.5px;" width="18" height="16.5" viewBox="0 0 24 22"><circle cx="8" cy="5.4" r="3.2" stroke="#fff" stroke-width="1.5" fill="none" stroke-linecap="round" stroke-linejoin="round"/><circle cx="17" cy="8" r="2.6" stroke="#fff" stroke-width="1.5" fill="none" stroke-linecap="round" stroke-linejoin="round"/><path d="M2 19.4 V17 Q2 12.4 8 12.4 Q14 12.4 14 17 V19.4z" stroke="#fff" stroke-width="1.5" fill="none" stroke-linecap="round" stroke-linejoin="round"/><path d="M14 13.6 Q15.4 13 17 13 Q22 13 22 17 V19.4 H14" stroke="#fff" stroke-width="1.5" fill="none" stroke-linecap="round" stroke-linejoin="round"/></svg>
<div class="t" style="left:386.6px;top:648.45px;font-size:10.6px;color:#b8b8b8;transform:scale(0.8312,0.8749);transform-origin:0 9.30px;">19</div>
<svg style="left:411.5px;top:652.5px;" width="10" height="6" viewBox="0 0 10 6"><path d="M1.6 4.6 L5 1.6 L8.4 4.6" fill="none" stroke="#fff" stroke-width="1.5" stroke-linecap="round" stroke-linejoin="round"/></svg>
<div class="t" style="left:348.0px;top:670.54px;font-size:10.7px;color:#fff;font-weight:bold;transform:scaleX(0.8912);transform-origin:0 0;">Участники</div>
<svg style="left:454px;top:646px;" width="20.5" height="20.5" viewBox="0 0 24 24"><path d="M7.2 5.6 V5 Q7.2 2 10.2 2 H19 Q22 2 22 5 V11.4 Q22 14 19.6 14.4" stroke="#fff" stroke-width="1.5" fill="none" stroke-linecap="round" stroke-linejoin="round"/><path d="M5 6.4 H15.6 Q18.6 6.4 18.6 9.4 V15 Q18.6 18 15.6 18 H9.4 L5.6 21.4 V18 H5 Q2 18 2 15 V9.4 Q2 6.4 5 6.4z" stroke="#fff" stroke-width="1.5" fill="none" stroke-linecap="round" stroke-linejoin="round"/><circle cx="6.6" cy="12.2" r="1.05" fill="#fff"/><circle cx="10.3" cy="12.2" r="1.05" fill="#fff"/><circle cx="14" cy="12.2" r="1.05" fill="#fff"/></svg>
<svg style="left:486.5px;top:652.5px;" width="10" height="6" viewBox="0 0 10 6"><path d="M1.6 4.6 L5 1.6 L8.4 4.6" fill="none" stroke="#fff" stroke-width="1.5" stroke-linecap="round" stroke-linejoin="round"/></svg>
<div class="t" style="left:457.0px;top:670.54px;font-size:10.7px;color:#fff;font-weight:bold;transform:scale(0.8284,0.9414);transform-origin:0 9.35px;">Чат</div>
<svg style="left:532.5px;top:646.5px;" width="23" height="19" viewBox="0 0 24 22"><path d="M12 19.6 Q2.2 12.4 2.2 7.2 Q2.2 2.6 6.8 2.6 Q10 2.6 12 5.8 Q14 2.6 17.2 2.6 Q21.8 2.6 21.8 7.2 Q21.8 12.4 12 19.6z" stroke="#fff" stroke-width="1.5" fill="none" stroke-linecap="round" stroke-linejoin="round" transform="rotate(-8 12 11)"/></svg>
<svg style="left:570px;top:652.5px;" width="10" height="6" viewBox="0 0 10 6"><path d="M1.6 4.6 L5 1.6 L8.4 4.6" fill="none" stroke="#fff" stroke-width="1.5" stroke-linecap="round" stroke-linejoin="round"/></svg>
<div class="t" style="left:509.0px;top:670.54px;font-size:10.7px;color:#fff;font-weight:bold;transform:scale(0.8716,0.9904);transform-origin:0 9.35px;">Отреагировать</div>
<div style="left:616.7px;top:648px;width:20px;height:15.6px;background:#22e07f;border-radius:3px;"></div>
<svg style="left:621.7px;top:650.3px;" width="10" height="11" viewBox="0 0 10 11"><path d="M5 9.6 V2.4 M1.8 5.2 L5 1.8 L8.2 5.2" fill="none" stroke="#0b0b0b" stroke-width="2" stroke-linecap="round" stroke-linejoin="round"/></svg>
<div class="t" style="left:599.5px;top:670.54px;font-size:10.7px;color:#fff;font-weight:bold;transform:scale(0.8487,0.9644);transform-origin:0 9.35px;">Поделиться</div>
<svg style="left:733px;top:645px;" width="22" height="22" viewBox="0 0 22 22"><circle cx="11" cy="11" r="9.2" stroke="#fff" stroke-width="1.5" fill="none" stroke-linecap="round" stroke-linejoin="round"/><circle cx="11" cy="6.6" r="1.2" fill="#fff"/><path d="M9.4 9.8 H11.4 V15.4 M9 15.6 H13.6" stroke="#fff" stroke-width="1.5" fill="none" stroke-linecap="round" stroke-linejoin="round"/></svg>
<div class="t" style="left:674.5px;top:670.54px;font-size:10.7px;color:#fff;font-weight:bold;transform:scaleX(0.9092);transform-origin:0 0;">Информация о конференции</div>
<svg style="left:848px;top:645px;" width="22" height="22" viewBox="0 0 22 22"><circle cx="16" cy="5.4" r="3.2" stroke="#fff" stroke-width="1.5" fill="none" stroke-linecap="round" stroke-linejoin="round"/><circle cx="6" cy="16.6" r="3.2" stroke="#fff" stroke-width="1.5" fill="none" stroke-linecap="round" stroke-linejoin="round"/><path d="M2.8 8.6 V6.4 Q2.8 2.4 6.8 2.4 H9.4" stroke="#fff" stroke-width="1.5" fill="none" stroke-linecap="round" stroke-linejoin="round"/><path d="M19.2 13.4 V15.6 Q19.2 19.6 15.2 19.6 H12.6" stroke="#fff" stroke-width="1.5" fill="none" stroke-linecap="round" stroke-linejoin="round"/></svg>
<div class="t" style="left:828.0px;top:670.54px;font-size:10.7px;color:#fff;font-weight:bold;transform:scaleX(0.9168);transform-origin:0 0;">Приложения</div>
<svg style="left:918px;top:645px;" width="22" height="22" viewBox="0 0 22 22"><circle cx="11" cy="11" r="9.2" stroke="#fff" stroke-width="1.5" fill="none" stroke-linecap="round" stroke-linejoin="round"/><circle cx="11" cy="11" r="3.8" fill="#fff"/></svg>
<div class="t" style="left:913.0px;top:670.54px;font-size:10.7px;color:#fff;font-weight:bold;transform:scale(0.8372,0.9513);transform-origin:0 9.35px;">Запись</div>
<svg style="left:995px;top:645px;" width="22" height="22" viewBox="0 0 22 22"><circle cx="11" cy="11" r="9.2" stroke="#fff" stroke-width="1.5" fill="none" stroke-linecap="round" stroke-linejoin="round"/><circle cx="6.6" cy="11" r="1.15" fill="#fff"/><circle cx="11" cy="11" r="1.15" fill="#fff"/><circle cx="15.4" cy="11" r="1.15" fill="#fff"/></svg>
<div class="t" style="left:968.4px;top:670.54px;font-size:10.7px;color:#fff;font-weight:bold;transform:scaleX(0.8836);transform-origin:0 0;">Дополнительно</div>
<svg style="left:1228px;top:645px;" width="24" height="22" viewBox="0 0 24 22"><path d="M13.6 2 H21.4 V17.6 H17.4" fill="none" stroke="#e8195c" stroke-width="1.4"/><path d="M14.2 2.4 L18.2 5 V20.4 L14.2 17.8z" fill="none" stroke="#e8195c" stroke-width="1.3"/><circle cx="9.4" cy="4.6" r="1.9" fill="none" stroke="#fff" stroke-width="1.3"/><path d="M8.6 7.6 L6 9.4 L5 12.6 M8.6 7.6 L8 13 L4.4 19.6 M8 13 L11 15.6 L11.6 19.8 M9 8 L12 11 L14 11.4" fill="none" stroke="#fff" stroke-width="1.4" stroke-linecap="round" stroke-linejoin="round"/></svg>
<div class="t" style="left:1224.5px;top:670.54px;font-size:10.7px;color:#fff;font-weight:bold;transform:scale(0.8366,0.9507);transform-origin:0 9.35px;">Выйти</div>
<div class="t" style="left:948.0px;top:602.22px;font-size:17.2px;color:rgba(150,150,150,.52);transform:scaleX(0.9627);transform-origin:0 0;">Активация Windows</div>
<div class="t" style="left:948.0px;top:625.52px;font-size:12px;color:rgba(150,150,150,.62);transform:scale(0.9316,0.9807);transform-origin:0 10.00px;">Чтобы активировать Windows, перейдите в раздел</div>
<div class="t" style="left:948.0px;top:641.52px;font-size:12px;color:rgba(170,170,170,.75);transform:scaleX(0.9628);transform-origin:0 0;">&quot;Параметры&quot;.</div>
<!-- TASKBAR -->
<div id="task"></div>
<svg style="left:13px;top:696px;" width="14" height="14" viewBox="0 0 14 14"><g fill="#fff"><path d="M0 2 L6.2 1.1 V6.6 H0z"/><path d="M7.2 1 L14 0 V6.6 H7.2z"/><path d="M0 7.5 H6.2 V13 L0 12.1z"/><path d="M7.2 7.5 H14 V14 L7.2 13z"/></g></svg>
<div style="left:40px;top:687px;width:239.6px;height:33px;background:#f2f2f2;"></div>
<svg style="left:50px;top:695px;" width="15" height="15" viewBox="0 0 15 15"><circle cx="9" cy="6" r="4.3" fill="none" stroke="#222" stroke-width="1.2"/><path d="M6 9.2 L1.4 13.8" stroke="#222" stroke-width="1.3" stroke-linecap="round"/></svg>
<div class="t" style="left:73.0px;top:697.10px;font-size:13.6px;color:#3a3a3a;transform:scaleX(0.9553);transform-origin:0 0;">Поиск</div>
<svg style="left:218px;top:690px;" width="58" height="28" viewBox="0 0 58 28"><path transform="translate(22.5,12.5)" d="M0 -9.2 Q2.024 -2.024 9.2 0 Q2.024 2.024 0 9.2 Q-2.024 2.024 -9.2 0 Q-2.024 -2.024 0 -9.2z" fill="#f2b22a"/><path transform="translate(41,15.6)" d="M0 -5.2 Q1.1440000000000001 -1.1440000000000001 5.2 0 Q1.1440000000000001 1.1440000000000001 0 5.2 Q-1.1440000000000001 1.1440000000000001 -5.2 0 Q-1.1440000000000001 -1.1440000000000001 0 -5.2z" fill="#f6c43a"/><path transform="translate(6.6,19)" d="M0 -3.6 Q0.792 -0.792 3.6 0 Q0.792 0.792 0 3.6 Q-0.792 0.792 -3.6 0 Q-0.792 -0.792 0 -3.6z" fill="#2aa2e8"/><circle cx="36" cy="4.4" r="1.4" fill="#e85a3a"/><circle cx="51" cy="21" r="1.5" fill="#7ac04a"/></svg>
<svg style="left:295px;top:695px;" width="17" height="16" viewBox="0 0 17 16"><rect x="3.2" y="3" width="8" height="9.6" fill="none" stroke="#fff" stroke-width="1.2"/><path d="M1 1 H13.4 M1 14.6 H13.4 M14.6 3 V6 M14.6 9 V12.6" stroke="#fff" stroke-width="1.2"/></svg>
<svg style="left:331px;top:691px;" width="25" height="25" viewBox="0 0 25 25"><defs><linearGradient id="ed" x1="0" y1="0" x2="1" y2="1"><stop offset="0" stop-color="#35c1f1"/><stop offset=".55" stop-color="#1b7fd4"/><stop offset="1" stop-color="#0c59a4"/></linearGradient></defs><circle cx="12.5" cy="12" r="10.6" fill="url(#ed)"/><path d="M3 9 Q7 1 15 2.4 Q22 4 22.6 11 Q18 6.6 12 8 Q6 9.6 6 15 Q3.4 13 3 9z" fill="#4fd36a"/><path d="M9 14.6 Q9 10.6 13.4 10.6 Q17 11 17 14 H10.6 Q11 18 16 18.6 Q12 21 9 14.6z" fill="#0b3f7a" opacity=".55"/><rect x="3" y="15" width="11" height="8.4" rx="1.2" fill="#e8832a"/><rect x="6.4" y="13.6" width="4.2" height="2" fill="none" stroke="#e8832a" stroke-width="1"/><rect x="3" y="18.4" width="11" height="1" fill="#b85f14"/></svg>
<svg style="left:372px;top:692px;" width="25" height="23" viewBox="0 0 25 23"><path d="M1.6 3.4 H9.4 L11.6 5.6 H23.4 V19.6 H1.6z" fill="#f2b62a"/><path d="M1.6 7.4 H23.4 V19.6 H1.6z" fill="#f8d36a"/><rect x="5.4" y="11.4" width="14.2" height="8.2" fill="#3a8fdc"/><rect x="8.6" y="14.6" width="7.8" height="5" fill="#f8d36a"/></svg>
<div style="left:405px;top:686.5px;width:40.6px;height:33.5px;background:#3b4046;"></div>
<div style="left:405px;top:718px;width:40.6px;height:2px;background:#8ecbf2;"></div>
<svg style="left:415.5px;top:693px;" width="20" height="20" viewBox="0 0 20 20"><rect x=".3" y=".3" width="19.4" height="19.4" rx="7.6" fill="#0b5cff"/></svg>
<div class="t" style="left:418.6px;top:699.85px;font-size:5.4px;color:#fff;font-weight:bold;transform:scaleX(0.9788);transform-origin:0 0;">zoom</div>
<svg style="left:455px;top:691px;" width="25" height="25" viewBox="0 0 25 25"><circle cx="18.4" cy="6.6" r="3" fill="#7b83eb"/><circle cx="11.6" cy="5.4" r="3.8" fill="#5059c9"/><path d="M14.4 10.6 H23 V17 Q23 21 19.4 21 Q16 21 14.4 18z" fill="#7b83eb"/><path d="M5.6 10.6 H17.6 V18 Q17.6 23.6 11.6 23.6 Q5.6 23.6 5.6 18z" fill="#5059c9"/><rect x="1.4" y="10.4" width="10.2" height="10.2" rx="1.2" fill="#4b53bc"/><path d="M4 12.8 H9 M6.5 12.8 V18.4" stroke="#fff" stroke-width="1.5"/></svg>
<svg style="left:496px;top:691px;" width="25" height="25" viewBox="0 0 25 25"><circle cx="12" cy="12" r="10.6" fill="#fff"/><path d="M12 1.4 A10.6 10.6 0 0 1 21.2 6.7 H12 A5.3 5.3 0 0 0 7.4 9.4 L2.8 6.7 A10.6 10.6 0 0 1 12 1.4z" fill="#e23e2e"/><path d="M21.2 6.7 A10.6 10.6 0 0 1 12 22.6 L16.6 14.6 A5.3 5.3 0 0 0 16.6 9.4 L12 6.7z" fill="#f8c02a"/><path d="M2.8 6.7 L7.4 14.6 A5.3 5.3 0 0 0 16.6 14.6 L12 22.6 A10.6 10.6 0 0 1 2.8 6.7z" fill="#2a9a4a"/><circle cx="12" cy="12" r="4.9" fill="#fff"/><circle cx="12" cy="12" r="3.9" fill="#3a7fe8"/><rect x="14" y="14" width="9.6" height="9.6" rx="1" fill="#a8221c"/><path d="M16 21.6 L21.6 16 M16.4 16.4 L18.6 18.6" stroke="#1a0a08" stroke-width="1.3"/></svg>
<svg style="left:538px;top:692px;" width="23" height="23" viewBox="0 0 23 23"><circle cx="11.5" cy="11.5" r="10.8" fill="#5865f2"/><path d="M5.4 15.4 Q5.4 10 7.6 7.4 Q9 6.6 10.2 6.6 L10.6 7.4 H12.4 L12.8 6.6 Q14 6.6 15.4 7.4 Q17.6 10 17.6 15.4 Q16 16.8 14.4 17 L13.6 15.8 Q9.4 16.2 9.4 15.8 L8.6 17 Q7 16.8 5.4 15.4z" fill="#fff"/><ellipse cx="9.4" cy="12.2" rx="1.2" ry="1.4" fill="#5865f2"/><ellipse cx="13.6" cy="12.2" rx="1.2" ry="1.4" fill="#5865f2"/></svg>
<svg style="left:912px;top:692px;" width="24" height="24" viewBox="0 0 24 24"><path d="M2.4 13.4 Q3 7 10.4 6.6 Q18 7 18.8 13.4 Q17.4 12 15.4 13.2 Q13.6 11.8 10.6 13.2 Q7.8 11.8 5.6 13.2 Q3.6 12 2.4 13.4z" fill="#4aa8ea"/><path d="M10.6 7 V19.4 Q10.6 21.4 8.8 21.4 Q7.4 21.4 7.4 20" fill="none" stroke="#a8a8a8" stroke-width="1.1"/><g stroke="#6ec0f4" stroke-width="1.2" stroke-linecap="round"><path d="M13 2.6 L12.4 4.2 M16.6 3.4 L16 5 M19.8 5.4 L19.2 7 M9.6 2 L9.2 3.2"/></g></svg>
<div class="t" style="left:940.7px;top:697.11px;font-size:13px;color:#fff;transform:scale(0.8773,0.9234);transform-origin:0 11.00px;">Rainy days ahead</div>
<svg style="left:1052px;top:699px;" width="13" height="9" viewBox="0 0 13 9"><path d="M1.4 7.4 L6.5 2 L11.6 7.4" fill="none" stroke="#fff" stroke-width="1.2"/></svg>
<svg style="left:1071px;top:694px;" width="13" height="18" viewBox="0 0 13 18"><rect x="3.6" y="1.4" width="5.8" height="9.4" rx="2.9" fill="#fff"/><path d="M1.6 8.6 Q1.6 13.2 6.5 13.2 Q11.4 13.2 11.4 8.6 M6.5 13.2 V15.6 M3.6 16 H9.4" fill="none" stroke="#fff" stroke-width="1.1"/></svg>
<svg style="left:1090px;top:698px;" width="18" height="11" viewBox="0 0 18 11"><rect x=".8" y="1.2" width="14.2" height="8.2" fill="none" stroke="#fff" stroke-width="1.1"/><rect x="2.4" y="2.8" width="6.8" height="5" fill="#fff"/><rect x="15.6" y="3.6" width="1.4" height="3.4" fill="#fff"/></svg>
<svg style="left:1110px;top:696px;" width="16" height="15" viewBox="0 0 16 15"><g fill="none" stroke="#fff" stroke-linecap="round"><path d="M2 12.6 Q2.6 4 13.6 2.4" stroke-width="1" opacity=".55"/><path d="M5 13 Q5.4 7.4 13.6 5.8" stroke-width="1.1"/><path d="M8 13.4 Q8.4 10 13.6 9" stroke-width="1.1"/></g><circle cx="12" cy="12.6" r="1.3" fill="#fff"/></svg>
<svg style="left:1129px;top:696px;" width="19" height="15" viewBox="0 0 19 15"><path d="M1.4 5.4 H4 L7.4 2.2 V12.8 L4 9.6 H1.4z" fill="none" stroke="#fff" stroke-width="1.1" stroke-linejoin="round"/><g fill="none" stroke="#fff" stroke-width="1.1" stroke-linecap="round"><path d="M10 5.6 Q11.4 7.5 10 9.4"/><path d="M12.4 3.8 Q15 7.5 12.4 11.2"/><path d="M14.8 2 Q18.6 7.5 14.8 13" opacity=".6"/></g></svg>
<div class="t" style="left:1155.0px;top:699.42px;font-size:8.6px;color:#fff;transform:scaleX(1.0118);transform-origin:0 0;">УКР</div>
<div class="t" style="left:1195.4px;top:690.98px;font-size:9.4px;color:#fff;transform:scaleX(0.9862);transform-origin:0 0;">13:09</div>
<div class="t" style="left:1183.5px;top:705.98px;font-size:9.4px;color:#fff;transform:scaleX(1.0033);transform-origin:0 0;">26.11.2025</div>
<svg style="left:1243px;top:695px;" width="18" height="17" viewBox="0 0 18 17"><path d="M1.6 1.6 H14.6 V11.6 H6 L3.4 14 V11.6 H1.6z" fill="#fff"/><path d="M4 4.6 H12.2 M4 7 H12.2 M4 9.2 H9" stroke="#1f2123" stroke-width=".9"/><circle cx="13" cy="12.6" r="2.6" fill="#1f2123" stroke="#fff" stroke-width=".8"/><path d="M12.2 12.6 H13.8" stroke="#fff" stroke-width=".8"/></svg>
</div>
</body>
</html>
